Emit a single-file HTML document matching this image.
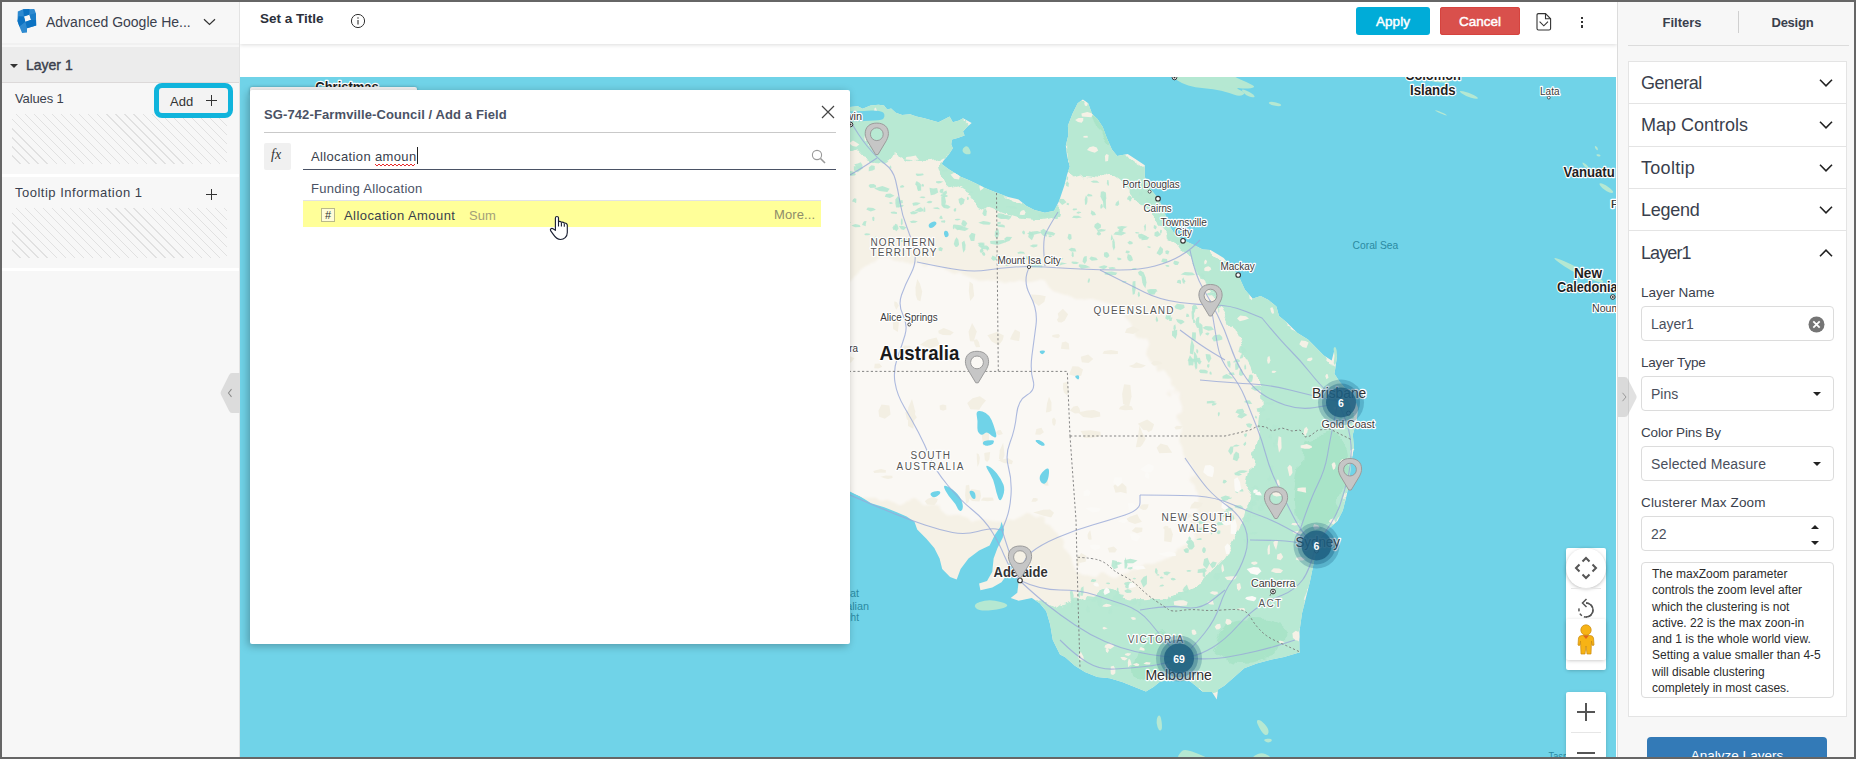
<!DOCTYPE html>
<html lang="en">
<head>
<meta charset="utf-8">
<title>Advanced Google Heatmap</title>
<style>
*{box-sizing:border-box;margin:0;padding:0}
html,body{width:1856px;height:759px;overflow:hidden;background:#666}
body{font-family:"Liberation Sans","DejaVu Sans",sans-serif;color:#3a3f4d;font-size:13px}
#app{position:absolute;left:2px;top:2px;width:1852px;height:755px;background:#fff;overflow:hidden}
.abs{position:absolute}
.t{position:absolute;white-space:nowrap;line-height:1}
/* left panel */
#left{position:absolute;left:0;top:0;width:238px;height:755px;background:#f7f7f7;border-right:1px solid #e3e3e3}
#lhead{position:absolute;left:0;top:0;width:237px;height:43px;border-bottom:2px solid #f1f1f1}
#layerrow{position:absolute;left:0;top:45px;width:237px;height:36px;background:#ececec;border-bottom:1px solid #dcd9d9}
.gap{position:absolute;left:0;width:237px;height:3px;background:#fff}
.hatch{position:absolute;left:10px;width:215px;background:repeating-linear-gradient(45deg,#f7f7f7 0,#f7f7f7 5.5px,#e1e1e1 5.5px,#e1e1e1 6.41px)}
/* top bar */
#topbar{position:absolute;left:238px;top:0;width:1377px;height:42px;background:#fff;box-shadow:0 1px 4px rgba(0,0,0,.14)}
.btn{position:absolute;top:5px;height:28px;border-radius:3px;color:#fff;-webkit-text-stroke:0.45px #fff;font-size:13.5px;text-align:center;line-height:30px}
/* map */
#map{position:absolute;left:238px;top:75px;width:1376px;height:680px;background:#70d3e8;overflow:hidden}
/* right */
#right{position:absolute;left:1615px;top:0;width:237px;height:755px;background:#f7f7f7;border-left:1px solid #dcdcdc}

/* right panel details */
.card{position:absolute;left:10px;width:219px;background:#fff;border:1px solid #e4e4e4}
.sec{position:absolute;left:23px;font-size:18px;color:#3a3f4d;white-space:nowrap;line-height:1}
.lbl{position:absolute;left:23px;font-size:13.5px;color:#3a3f4d;white-space:nowrap;line-height:1}
.inp{position:absolute;left:23px;width:193px;height:35px;border:1px solid #dcdcdc;border-radius:4px;background:#fff}
.inp span{position:absolute;left:9px;top:10px;font-size:14px;color:#4a4f5c;line-height:1;white-space:nowrap}
.chev{position:absolute;left:199.5px;width:16px;height:10px}
.caret{position:absolute;left:171px;top:15px;width:0;height:0;border-left:4px solid transparent;border-right:4px solid transparent;border-top:4.5px solid #222}
/* dialog */
#dlg{position:absolute;left:248px;top:88px;width:600px;height:554px;background:#fff;border-radius:2px;box-shadow:-2px 2px 8px rgba(0,0,0,.28)}
#dlgtab{position:absolute;left:248px;top:85px;width:167px;height:8px;background:#f3f3f3;border-radius:2px 2px 0 0;box-shadow:0 0 3px rgba(0,0,0,.3)}
</style>
</head>
<body>
<div id="app">

<!-- MAP -->
<div id="map">
<!--MAPSVG--><svg width="1376" height="680" viewBox="240 77 1376 680" style="position:absolute;left:0;top:0">
<defs><clipPath id="landclip"><path d="M838 107 L850 107.1 L857.9 106.3 L862.6 108.7 L870.6 105.6 L878.5 104.8 L884 105.6 L887.2 109.5 L891.1 108.4 L895.8 112.7 L902.2 115 L910.1 114.2 L916.4 116.6 L924.3 118.2 L932.2 120.6 L938.5 122.2 L944.9 119 L949.6 116.6 L952.8 122.2 L959.1 120.6 L963 118.2 L971.7 122.9 L967 126.9 L963 131.6 L964.6 135.6 L957.5 138 L952 139.5 L951.2 144.3 L952.8 148.2 L948.8 154.6 L943.3 160.9 L941.7 164 L948 168.8 L954.3 172.7 L960.7 176.7 L968.6 179.9 L976.5 183.8 L984.4 187.8 L992.3 190.9 L1000.2 194.1 L1008.1 196.9 L1018.6 199.5 L1026.5 206.1 L1034.4 210.0 L1044.9 212.7 L1054.2 210.8 L1059.2 200.8 L1064.5 185.0 L1067.1 174.5 L1069.8 166.6 L1067.1 156.0 L1065.8 145.5 L1068.4 135.0 L1067.9 125.7 L1072.4 113.9 L1077.7 103.3 L1082.9 99.4 L1088.2 103.3 L1092.1 113.9 L1097.4 119.1 L1102.7 127.1 L1106.6 137.6 L1111.9 149.4 L1117.2 156.0 L1127.7 153.9 L1136.9 160.0 L1144.8 165.3 L1144.8 177.1 L1151.4 190.3 L1158.0 198.2 L1163.3 208.7 L1168.5 224.5 L1173.8 232.4 L1183.0 240.3 L1192.3 244.3 L1202.8 249.6 L1210.5 250.0 L1223.7 257.9 L1238.2 275.0 L1244.8 289.5 L1252.7 298.7 L1260.6 296.1 L1268.5 300.1 L1276.4 306.6 L1279.0 315.9 L1286.9 322.4 L1297.5 333.0 L1308.0 339.6 L1315.9 347.5 L1323.8 355.4 L1331.7 360.6 L1334.4 350.1 L1337.0 355.4 L1335.7 365.9 L1334.4 373.8 L1339.6 381.7 L1346.2 389.6 L1354.1 397.5 L1358.1 408.1 L1356.7 421.2 L1352.8 434.4 L1354.1 449.9 L1353.4 450.0 L1350.7 465.8 L1349.4 481.6 L1346.8 494.8 L1342.8 510.6 L1337.6 521.1 L1328.4 529.0 L1319.1 539.6 L1315.2 555.4 L1312.6 568.5 L1309.9 581.7 L1306.0 597.5 L1302.0 613.3 L1299.4 631.8 L1299.4 649.9 L1300.0 652.2 L1284.0 657.1 L1271.6 659.6 L1256.7 663.4 L1244.2 668.3 L1234.3 677.0 L1224.3 685.8 L1218.1 689.5 L1216.8 699.4 L1211.9 692.0 L1203.1 692.0 L1195.7 685.8 L1189.4 680.8 L1179.5 680.8 L1169.5 679.5 L1159.6 682.0 L1153.4 687.0 L1145.9 691.5 L1134.7 687.0 L1122.2 682.0 L1109.8 678.3 L1097.3 677.0 L1084.9 672.1 L1074.9 665.8 L1065.0 657.1 L1060.0 654.6 L1052.8 639.9 L1050.2 624.4 L1046.3 611.2 L1039.7 603.3 L1031.8 598.1 L1018.6 600.7 L1010.7 598.1 L1017.3 592.8 L1018.6 582.3 L1014.6 571.7 L1010.7 561.2 L1008.1 566.4 L1005.4 577.0 L1001.5 582.3 L992.3 587.5 L980.4 590.2 L979.1 583.6 L987.0 580.9 L992.3 571.7 L993.6 558.5 L997.5 548.0 L1002.8 537.5 L1004.1 529.6 L1001.5 521.7 L1000.2 526.9 L994.9 534.8 L989.6 545.4 L979.1 550.6 L968.5 558.5 L960.6 569.1 L956.7 579.6 L950.1 577.0 L942.2 569.1 L939.6 558.5 L934.3 548.0 L926.4 538.8 L917.2 529.6 L914.5 521.7 L906.6 516.4 L897.4 512.4 L884.2 507.2 L871.1 503.2 L860.5 496.6 L850.0 491.4 L838 490 Z"/></clipPath><filter id="b6" x="-20%" y="-20%" width="140%" height="140%"><feTurbulence type="fractalNoise" baseFrequency="0.03" numOctaves="3" seed="9" result="n"/><feDisplacementMap in="SourceGraphic" in2="n" scale="30" xChannelSelector="R" yChannelSelector="G" result="d"/><feGaussianBlur in="d" stdDeviation="1.2"/></filter><filter id="b3" x="-10%" y="-10%" width="120%" height="120%"><feTurbulence type="fractalNoise" baseFrequency="0.035" numOctaves="3" seed="4" result="n"/><feDisplacementMap in="SourceGraphic" in2="n" scale="22" xChannelSelector="R" yChannelSelector="G"/></filter></defs>
<rect x="240" y="77" width="1376" height="680" fill="#70d3e8"/>
<path d="M838 107 L850 107.1 L857.9 106.3 L862.6 108.7 L870.6 105.6 L878.5 104.8 L884 105.6 L887.2 109.5 L891.1 108.4 L895.8 112.7 L902.2 115 L910.1 114.2 L916.4 116.6 L924.3 118.2 L932.2 120.6 L938.5 122.2 L944.9 119 L949.6 116.6 L952.8 122.2 L959.1 120.6 L963 118.2 L971.7 122.9 L967 126.9 L963 131.6 L964.6 135.6 L957.5 138 L952 139.5 L951.2 144.3 L952.8 148.2 L948.8 154.6 L943.3 160.9 L941.7 164 L948 168.8 L954.3 172.7 L960.7 176.7 L968.6 179.9 L976.5 183.8 L984.4 187.8 L992.3 190.9 L1000.2 194.1 L1008.1 196.9 L1018.6 199.5 L1026.5 206.1 L1034.4 210.0 L1044.9 212.7 L1054.2 210.8 L1059.2 200.8 L1064.5 185.0 L1067.1 174.5 L1069.8 166.6 L1067.1 156.0 L1065.8 145.5 L1068.4 135.0 L1067.9 125.7 L1072.4 113.9 L1077.7 103.3 L1082.9 99.4 L1088.2 103.3 L1092.1 113.9 L1097.4 119.1 L1102.7 127.1 L1106.6 137.6 L1111.9 149.4 L1117.2 156.0 L1127.7 153.9 L1136.9 160.0 L1144.8 165.3 L1144.8 177.1 L1151.4 190.3 L1158.0 198.2 L1163.3 208.7 L1168.5 224.5 L1173.8 232.4 L1183.0 240.3 L1192.3 244.3 L1202.8 249.6 L1210.5 250.0 L1223.7 257.9 L1238.2 275.0 L1244.8 289.5 L1252.7 298.7 L1260.6 296.1 L1268.5 300.1 L1276.4 306.6 L1279.0 315.9 L1286.9 322.4 L1297.5 333.0 L1308.0 339.6 L1315.9 347.5 L1323.8 355.4 L1331.7 360.6 L1334.4 350.1 L1337.0 355.4 L1335.7 365.9 L1334.4 373.8 L1339.6 381.7 L1346.2 389.6 L1354.1 397.5 L1358.1 408.1 L1356.7 421.2 L1352.8 434.4 L1354.1 449.9 L1353.4 450.0 L1350.7 465.8 L1349.4 481.6 L1346.8 494.8 L1342.8 510.6 L1337.6 521.1 L1328.4 529.0 L1319.1 539.6 L1315.2 555.4 L1312.6 568.5 L1309.9 581.7 L1306.0 597.5 L1302.0 613.3 L1299.4 631.8 L1299.4 649.9 L1300.0 652.2 L1284.0 657.1 L1271.6 659.6 L1256.7 663.4 L1244.2 668.3 L1234.3 677.0 L1224.3 685.8 L1218.1 689.5 L1216.8 699.4 L1211.9 692.0 L1203.1 692.0 L1195.7 685.8 L1189.4 680.8 L1179.5 680.8 L1169.5 679.5 L1159.6 682.0 L1153.4 687.0 L1145.9 691.5 L1134.7 687.0 L1122.2 682.0 L1109.8 678.3 L1097.3 677.0 L1084.9 672.1 L1074.9 665.8 L1065.0 657.1 L1060.0 654.6 L1052.8 639.9 L1050.2 624.4 L1046.3 611.2 L1039.7 603.3 L1031.8 598.1 L1018.6 600.7 L1010.7 598.1 L1017.3 592.8 L1018.6 582.3 L1014.6 571.7 L1010.7 561.2 L1008.1 566.4 L1005.4 577.0 L1001.5 582.3 L992.3 587.5 L980.4 590.2 L979.1 583.6 L987.0 580.9 L992.3 571.7 L993.6 558.5 L997.5 548.0 L1002.8 537.5 L1004.1 529.6 L1001.5 521.7 L1000.2 526.9 L994.9 534.8 L989.6 545.4 L979.1 550.6 L968.5 558.5 L960.6 569.1 L956.7 579.6 L950.1 577.0 L942.2 569.1 L939.6 558.5 L934.3 548.0 L926.4 538.8 L917.2 529.6 L914.5 521.7 L906.6 516.4 L897.4 512.4 L884.2 507.2 L871.1 503.2 L860.5 496.6 L850.0 491.4 L838 490 Z" fill="#f5f1e6"/>
<g clip-path="url(#landclip)">
<path d="M838.0 379.0 Q838 268 869.0 265.0 Q900 262 930.0 265.0 Q960 268 980.0 276.5 Q1000 285 1030.0 287.5 Q1060 290 1085.0 297.5 Q1110 305 1125.0 320.0 Q1140 335 1152.5 352.5 Q1165 370 1170.0 390.0 Q1175 410 1180.0 430.0 Q1185 450 1192.5 470.0 Q1200 490 1197.5 510.0 Q1195 530 1177.5 547.5 Q1160 565 1135.0 570.0 Q1110 575 1095.0 575.0 Q1080 575 1070.0 552.5 Q1060 530 1040.0 520.0 Q1020 510 1000.0 515.0 Q980 520 960.0 510.0 Q940 500 920.0 502.5 Q900 505 880.0 500.0 Q860 495 849.0 492.5 Q838 490 838.0 379.0 Z" fill="#faf8f4" filter="url(#b6)"/>
<path d="M838.0 127.5 Q838 95 859.0 95.0 Q880 95 905.0 102.5 Q930 110 952.5 114.0 Q975 118 967.5 129.0 Q960 140 952.5 150.0 Q945 160 932.5 162.5 Q920 165 910.0 157.5 Q900 150 890.0 155.0 Q880 160 870.0 155.0 Q860 150 849.0 155.0 Q838 160 838.0 127.5 Z" fill="#b5e8d2" filter="url(#b3)" opacity="0.95"/>
<path d="M937.5 165.0 Q940 160 950.0 165.0 Q960 170 980.0 182.5 Q1000 195 1020.0 202.5 Q1040 210 1050.0 205.0 Q1060 200 1060.0 207.5 Q1060 215 1045.0 218.5 Q1030 222 1010.0 215.0 Q990 208 972.5 199.0 Q955 190 945.0 180.0 Q935 170 937.5 165.0 Z" fill="#b5e8d2" filter="url(#b3)" opacity="0.95"/>
<path d="M1062.0 130.0 Q1062 100 1076.0 97.5 Q1090 95 1100.0 112.5 Q1110 130 1120.0 145.0 Q1130 160 1140.0 165.0 Q1150 170 1157.5 185.0 Q1165 200 1175.0 215.0 Q1185 230 1192.5 237.5 Q1200 245 1190.0 247.5 Q1180 250 1167.5 237.5 Q1155 225 1145.0 212.5 Q1135 200 1126.5 190.0 Q1118 180 1109.0 176.0 Q1100 172 1090.0 172.0 Q1080 172 1073.0 174.0 Q1066 176 1064.0 168.0 Q1062 160 1062.0 130.0 Z" fill="#b5e8d2" filter="url(#b3)" opacity="0.95"/>
<path d="M1177.5 232.5 Q1180 225 1197.5 237.5 Q1215 250 1230.0 265.0 Q1245 280 1260.0 292.5 Q1275 305 1287.5 317.5 Q1300 330 1317.5 345.0 Q1335 360 1342.5 375.0 Q1350 390 1355.0 410.0 Q1360 430 1357.5 450.0 Q1355 470 1347.5 495.0 Q1340 520 1330.0 540.0 Q1320 560 1310.0 590.0 Q1300 620 1300.0 640.0 Q1300 660 1275.0 670.0 Q1250 680 1225.0 690.0 Q1200 700 1175.0 700.0 Q1150 700 1125.0 695.0 Q1100 690 1080.0 680.0 Q1060 670 1050.0 655.0 Q1040 640 1035.0 622.5 Q1030 605 1037.5 601.5 Q1045 598 1053.5 604.0 Q1062 610 1073.5 605.0 Q1085 600 1095.0 595.0 Q1105 590 1120.0 595.0 Q1135 600 1150.0 599.0 Q1165 598 1180.0 594.0 Q1195 590 1207.5 577.5 Q1220 565 1229.0 547.5 Q1238 530 1243.0 510.0 Q1248 490 1251.5 470.0 Q1255 450 1258.5 430.0 Q1262 410 1260.0 392.5 Q1258 375 1249.0 360.0 Q1240 345 1232.5 330.0 Q1225 315 1215.0 300.0 Q1205 285 1197.5 272.5 Q1190 260 1182.5 250.0 Q1175 240 1177.5 232.5 Z" fill="#b5e8d2" filter="url(#b3)" opacity="0.95"/>
<path d="M1302.5 455.0 Q1305 440 1322.5 435.0 Q1340 430 1345.0 450.0 Q1350 470 1342.5 495.0 Q1335 520 1322.5 530.0 Q1310 540 1302.5 525.0 Q1295 510 1297.5 490.0 Q1300 470 1302.5 455.0 Z" fill="#98ddbb" filter="url(#b3)" opacity="0.45"/>
<path d="M1215.0 637.5 Q1220 625 1240.0 620.0 Q1260 615 1275.0 622.5 Q1290 630 1285.0 642.5 Q1280 655 1260.0 660.0 Q1240 665 1225.0 657.5 Q1210 650 1215.0 637.5 Z" fill="#98ddbb" filter="url(#b3)" opacity="0.45"/>
<path d="M1135.0 657.5 Q1140 640 1160.0 635.0 Q1180 630 1190.0 645.0 Q1200 660 1185.0 670.0 Q1170 680 1150.0 677.5 Q1130 675 1135.0 657.5 Z" fill="#98ddbb" filter="url(#b3)" opacity="0.45"/>
<path d="M1097.0 130.0 Q1090 110 1095.0 107.5 Q1100 105 1106.0 122.5 Q1112 140 1108.0 145.0 Q1104 150 1097.0 130.0 Z" fill="#98ddbb" filter="url(#b3)" opacity="0.45"/>
<path d="M898.8 225.9 L902.9 226.0 L906.6 227.3 L903.8 230.0 L901.1 229.3 Z" fill="#b5e8d2" opacity="0.9"/>
<path d="M1185.3 552.5 L1183.4 549.8 L1186.0 548.2 L1187.8 548.2 L1189.0 550.0 L1188.3 553.0 Z" fill="#b5e8d2" opacity="0.9"/>
<path d="M1190.8 361.5 L1187.4 360.3 L1189.8 358.8 L1194.3 358.7 L1197.7 359.4 L1199.9 361.0 L1195.1 361.8 Z" fill="#b5e8d2" opacity="0.9"/>
<path d="M1194.9 323.0 L1193.3 323.0 L1192.9 320.2 L1194.6 319.5 L1195.3 321.2 Z" fill="#b5e8d2" opacity="0.9"/>
<path d="M872.2 217.5 L873.3 216.4 L874.5 217.7 L874.1 221.0 L873.1 221.0 L872.4 220.1 Z" fill="#b5e8d2" opacity="0.9"/>
<path d="M1087.8 282.7 L1087.7 280.7 L1088.2 279.7 L1089.0 277.8 L1090.0 279.5 L1089.7 281.0 L1089.2 282.5 Z" fill="#b5e8d2" opacity="0.9"/>
<path d="M1237.3 409.4 L1242.7 408.8 L1244.3 411.5 L1243.3 413.5 L1239.6 414.2 L1235.4 412.5 Z" fill="#b5e8d2" opacity="0.9"/>
<path d="M1253.0 375.4 L1252.7 377.4 L1250.6 378.3 L1249.1 377.0 L1248.9 375.8 L1249.7 374.8 L1251.0 374.8 Z" fill="#b5e8d2" opacity="0.9"/>
<path d="M1244.3 541.9 L1243.2 539.3 L1248.4 539.3 L1249.7 541.7 L1246.8 543.7 Z" fill="#b5e8d2" opacity="0.9"/>
<path d="M887.3 192.0 L879.5 190.9 L874.1 188.6 L882.4 186.1 L889.7 188.7 Z" fill="#b5e8d2" opacity="0.9"/>
<path d="M1068.5 205.2 L1066.7 204.8 L1066.6 203.5 L1067.9 202.8 L1069.2 203.7 Z" fill="#b5e8d2" opacity="0.9"/>
<path d="M1127.4 242.8 L1129.6 240.7 L1132.5 242.0 L1132.6 244.0 L1129.6 244.4 Z" fill="#b5e8d2" opacity="0.9"/>
<path d="M875.5 240.8 L874.6 239.2 L874.9 236.9 L875.8 236.2 L876.4 236.9 L876.5 238.3 L876.4 240.0 Z" fill="#b5e8d2" opacity="0.9"/>
<path d="M1153.6 228.0 L1154.0 225.0 L1156.4 226.0 L1156.7 227.8 L1155.4 229.5 Z" fill="#b5e8d2" opacity="0.9"/>
<path d="M845.1 244.0 L846.4 243.5 L848.1 243.3 L849.9 243.7 L849.8 244.4 L848.0 244.8 L845.9 244.6 Z" fill="#b5e8d2" opacity="0.9"/>
<path d="M1000.2 221.7 L1001.1 223.3 L998.9 224.2 L997.1 223.4 L997.4 222.3 Z" fill="#b5e8d2" opacity="0.9"/>
<path d="M972.6 191.5 L973.0 192.3 L971.9 193.0 L970.0 192.9 L970.0 192.0 L970.8 191.1 Z" fill="#b5e8d2" opacity="0.9"/>
<path d="M998.4 229.1 L999.3 233.4 L998.2 237.0 L996.3 238.5 L994.7 235.8 L995.0 231.8 L996.4 230.2 Z" fill="#b5e8d2" opacity="0.9"/>
<path d="M1132.6 578.2 L1134.4 577.8 L1135.9 578.2 L1136.1 578.7 L1135.6 579.1 L1134.2 579.4 L1133.4 578.9 Z" fill="#b5e8d2" opacity="0.9"/>
<path d="M1272.3 426.7 L1273.2 424.1 L1275.0 425.1 L1277.6 426.1 L1276.9 430.3 L1274.3 429.8 L1272.4 429.8 Z" fill="#b5e8d2" opacity="0.9"/>
<path d="M1227.7 378.8 L1222.5 378.5 L1222.6 376.0 L1226.6 373.9 L1230.1 376.0 L1233.7 378.3 Z" fill="#b5e8d2" opacity="0.9"/>
<path d="M1150.3 293.8 L1148.7 292.9 L1148.4 291.3 L1150.6 289.6 L1154.2 290.4 L1155.4 292.7 L1152.7 294.2 Z" fill="#b5e8d2" opacity="0.9"/>
<path d="M1073.8 256.5 L1072.5 257.2 L1071.6 255.3 L1072.0 251.9 L1073.5 252.5 Z" fill="#b5e8d2" opacity="0.9"/>
<path d="M1191.6 340.1 L1192.0 336.1 L1192.2 332.3 L1195.9 332.4 L1195.9 336.4 L1195.6 340.6 Z" fill="#b5e8d2" opacity="0.9"/>
<path d="M1063.5 259.1 L1061.4 259.5 L1058.9 259.1 L1060.4 257.9 L1062.4 258.0 Z" fill="#b5e8d2" opacity="0.9"/>
<path d="M984.8 249.2 L981.2 248.7 L981.1 246.5 L983.8 245.5 L986.7 245.6 L988.5 246.9 L989.5 249.4 Z" fill="#b5e8d2" opacity="0.9"/>
<path d="M1094.2 227.0 L1094.7 224.6 L1097.8 222.6 L1101.0 224.7 L1100.9 227.5 L1097.1 229.9 Z" fill="#b5e8d2" opacity="0.9"/>
<path d="M1113.9 569.3 L1111.4 566.0 L1112.3 559.9 L1116.9 561.1 L1117.8 567.7 Z" fill="#b5e8d2" opacity="0.9"/>
<path d="M1239.2 367.1 L1237.6 369.6 L1235.4 370.0 L1235.1 363.6 L1237.9 362.7 Z" fill="#b5e8d2" opacity="0.9"/>
<path d="M1202.6 524.1 L1198.9 523.5 L1198.6 522.2 L1199.7 520.4 L1203.2 521.5 L1205.6 522.8 Z" fill="#b5e8d2" opacity="0.9"/>
<path d="M962.3 228.6 L957.5 230.2 L954.4 227.7 L953.9 224.6 L958.9 225.1 L963.0 225.8 Z" fill="#b5e8d2" opacity="0.9"/>
<path d="M1210.7 281.4 L1211.0 283.7 L1208.8 283.8 L1208.8 281.7 L1209.5 280.0 Z" fill="#b5e8d2" opacity="0.9"/>
<path d="M1163.1 249.0 L1162.7 253.1 L1159.9 255.6 L1156.5 253.3 L1158.5 249.7 L1160.2 246.3 Z" fill="#b5e8d2" opacity="0.9"/>
<path d="M1165.3 218.5 L1165.3 221.1 L1163.9 223.4 L1162.9 220.5 L1162.3 218.0 L1163.2 215.1 L1165.1 215.3 Z" fill="#b5e8d2" opacity="0.9"/>
<path d="M984.3 256.1 L983.1 255.6 L981.7 253.6 L983.3 251.8 L984.8 252.7 L985.3 254.7 Z" fill="#b5e8d2" opacity="0.9"/>
<path d="M1076.3 251.5 L1071.3 251.6 L1068.5 249.6 L1071.6 247.8 L1075.2 248.5 Z" fill="#b5e8d2" opacity="0.9"/>
<path d="M996.5 216.5 L998.1 213.3 L1001.3 213.6 L1004.1 214.2 L1004.8 217.3 L1002.0 219.0 L999.4 218.4 Z" fill="#b5e8d2" opacity="0.9"/>
<path d="M1173.4 328.4 L1173.7 325.8 L1175.3 324.3 L1175.9 328.1 L1174.6 331.7 Z" fill="#b5e8d2" opacity="0.9"/>
<path d="M919.3 197.3 L921.5 196.6 L923.2 196.6 L925.5 197.1 L924.2 198.3 L921.5 198.0 Z" fill="#b5e8d2" opacity="0.9"/>
<path d="M1160.6 584.9 L1162.8 584.4 L1164.2 585.8 L1162.1 586.4 L1159.1 586.5 Z" fill="#b5e8d2" opacity="0.9"/>
<path d="M1072.3 601.4 L1071.4 599.0 L1074.7 597.6 L1078.3 598.0 L1078.5 600.1 L1079.1 602.4 L1075.2 602.8 Z" fill="#b5e8d2" opacity="0.9"/>
<path d="M1244.4 369.3 L1244.3 366.6 L1245.0 363.9 L1246.0 365.9 L1246.2 369.1 L1245.2 369.6 Z" fill="#b5e8d2" opacity="0.9"/>
<path d="M1256.5 504.9 L1252.8 505.7 L1248.9 504.2 L1251.7 500.8 L1255.6 500.0 Z" fill="#b5e8d2" opacity="0.9"/>
<path d="M930.8 195.3 L930.0 191.5 L929.5 187.8 L933.1 188.5 L937.1 187.9 L938.2 192.4 L934.5 194.4 Z" fill="#b5e8d2" opacity="0.9"/>
<path d="M1117.1 606.7 L1112.8 605.4 L1111.7 603.4 L1118.2 602.9 L1121.6 604.1 L1123.5 606.0 Z" fill="#b5e8d2" opacity="0.9"/>
<path d="M1184.7 282.6 L1183.5 281.7 L1183.7 280.1 L1184.8 280.2 L1185.6 281.2 Z" fill="#b5e8d2" opacity="0.9"/>
<path d="M1253.1 514.5 L1258.4 514.7 L1259.6 516.2 L1256.6 516.9 L1252.1 516.6 Z" fill="#b5e8d2" opacity="0.9"/>
<path d="M1052.3 236.5 L1050.2 237.2 L1048.8 236.9 L1048.5 235.6 L1050.6 235.3 Z" fill="#b5e8d2" opacity="0.9"/>
<path d="M1175.9 579.7 L1173.2 580.5 L1171.1 579.8 L1170.7 578.4 L1172.6 577.8 L1174.7 578.2 Z" fill="#b5e8d2" opacity="0.9"/>
<path d="M1103.9 202.9 L1101.7 199.3 L1100.4 196.4 L1100.9 191.7 L1103.2 191.2 L1105.9 192.5 L1106.3 198.7 Z" fill="#b5e8d2" opacity="0.9"/>
<path d="M1232.8 520.4 L1230.9 520.8 L1231.0 515.4 L1233.1 514.4 L1234.4 518.4 Z" fill="#b5e8d2" opacity="0.9"/>
<path d="M1168.1 265.1 L1169.5 265.9 L1168.3 266.9 L1166.2 266.6 L1165.3 265.1 Z" fill="#b5e8d2" opacity="0.9"/>
<path d="M1272.1 436.9 L1271.2 440.2 L1269.7 438.2 L1268.6 436.8 L1269.4 434.5 L1271.1 433.9 Z" fill="#b5e8d2" opacity="0.9"/>
<path d="M989.5 224.7 L983.4 224.4 L978.3 222.8 L983.2 221.0 L988.0 221.7 L990.9 222.7 Z" fill="#b5e8d2" opacity="0.9"/>
<path d="M1110.3 608.1 L1112.0 608.6 L1112.3 612.1 L1111.0 613.6 L1109.7 614.6 L1108.0 612.7 L1109.2 609.9 Z" fill="#b5e8d2" opacity="0.9"/>
<path d="M917.5 186.8 L919.0 185.0 L920.1 187.2 L920.8 189.5 L918.4 190.7 L917.4 188.4 Z" fill="#b5e8d2" opacity="0.9"/>
<path d="M915.2 184.5 L915.9 182.1 L916.9 181.1 L918.1 182.2 L917.6 184.3 L916.6 185.8 Z" fill="#b5e8d2" opacity="0.9"/>
<path d="M1250.6 511.5 L1249.3 509.9 L1250.2 506.1 L1250.7 503.7 L1252.1 502.8 L1252.6 508.0 L1251.8 512.1 Z" fill="#b5e8d2" opacity="0.9"/>
<path d="M1179.9 596.7 L1181.9 598.7 L1178.6 600.4 L1173.9 600.5 L1171.5 599.0 L1172.5 597.4 L1175.4 596.1 Z" fill="#b5e8d2" opacity="0.9"/>
<path d="M1247.6 518.0 L1250.8 519.7 L1247.8 521.8 L1244.1 521.8 L1241.9 519.0 L1244.5 516.1 Z" fill="#b5e8d2" opacity="0.9"/>
<path d="M1073.7 215.7 L1078.5 215.7 L1081.9 217.5 L1076.7 218.2 L1072.0 217.7 Z" fill="#b5e8d2" opacity="0.9"/>
<path d="M1018.1 253.7 L1017.3 252.4 L1020.0 251.4 L1023.3 251.8 L1024.2 252.6 L1025.2 253.7 L1021.7 253.5 Z" fill="#b5e8d2" opacity="0.9"/>
<path d="M1182.5 590.1 L1184.3 587.2 L1186.9 584.5 L1188.3 588.6 L1188.3 593.1 L1184.9 592.3 Z" fill="#b5e8d2" opacity="0.9"/>
<path d="M1029.6 246.1 L1032.9 244.6 L1037.5 244.6 L1037.2 246.5 L1033.6 247.4 Z" fill="#b5e8d2" opacity="0.9"/>
<path d="M1139.0 606.1 L1138.4 603.0 L1139.6 601.5 L1140.9 600.4 L1141.3 603.5 L1140.6 606.1 Z" fill="#b5e8d2" opacity="0.9"/>
<path d="M1125.4 252.6 L1126.3 250.5 L1129.7 251.1 L1129.4 252.9 L1127.5 253.5 Z" fill="#b5e8d2" opacity="0.9"/>
<path d="M911.6 223.1 L909.7 221.6 L913.1 220.4 L917.9 221.3 L915.4 222.8 Z" fill="#b5e8d2" opacity="0.9"/>
<path d="M1125.6 587.7 L1125.0 586.1 L1126.9 584.4 L1129.4 585.7 L1129.9 587.9 L1127.4 588.5 Z" fill="#b5e8d2" opacity="0.9"/>
<path d="M892.3 202.4 L892.7 203.7 L890.0 204.0 L889.0 202.8 L890.6 202.1 Z" fill="#b5e8d2" opacity="0.9"/>
<path d="M857.8 163.6 L860.8 162.3 L862.5 165.3 L862.2 169.1 L858.1 169.6 L856.4 167.0 L854.3 164.3 Z" fill="#b5e8d2" opacity="0.9"/>
<path d="M1084.4 256.5 L1086.7 256.1 L1086.9 260.7 L1084.8 263.9 L1082.5 261.6 L1083.3 257.9 Z" fill="#b5e8d2" opacity="0.9"/>
<path d="M1133.3 268.2 L1135.3 268.1 L1137.0 268.9 L1135.8 269.8 L1133.5 270.0 L1132.2 269.4 L1131.9 268.7 Z" fill="#b5e8d2" opacity="0.9"/>
<path d="M1143.4 587.6 L1140.6 581.1 L1143.5 576.9 L1147.0 575.6 L1146.9 584.1 Z" fill="#b5e8d2" opacity="0.9"/>
<path d="M943.0 222.6 L941.2 222.2 L941.2 220.8 L943.1 220.6 L945.0 220.3 L945.3 221.6 L944.9 222.8 Z" fill="#b5e8d2" opacity="0.9"/>
<path d="M1087.3 596.1 L1093.0 596.7 L1097.0 597.3 L1096.7 598.9 L1093.2 599.6 L1086.9 600.5 L1085.7 598.2 Z" fill="#b5e8d2" opacity="0.9"/>
<path d="M1034.0 235.7 L1031.9 240.2 L1028.2 236.9 L1029.4 231.0 L1032.5 232.8 Z" fill="#b5e8d2" opacity="0.9"/>
<path d="M1250.9 519.1 L1249.0 523.2 L1246.6 520.5 L1246.8 515.9 L1248.1 512.5 L1250.5 513.7 Z" fill="#b5e8d2" opacity="0.9"/>
<path d="M1091.9 194.7 L1092.5 196.3 L1087.7 196.6 L1086.9 195.2 L1088.3 193.8 Z" fill="#b5e8d2" opacity="0.9"/>
<path d="M1068.6 186.9 L1066.0 185.8 L1065.7 183.2 L1067.2 181.0 L1068.8 183.2 Z" fill="#b5e8d2" opacity="0.9"/>
<path d="M986.3 249.1 L986.4 247.4 L987.5 246.4 L988.7 247.5 L988.3 249.3 L987.2 251.2 Z" fill="#b5e8d2" opacity="0.9"/>
<path d="M1050.4 259.5 L1051.2 257.3 L1053.1 258.4 L1052.8 261.8 L1050.7 262.1 Z" fill="#b5e8d2" opacity="0.9"/>
<path d="M1118.9 229.9 L1119.9 228.7 L1123.1 228.9 L1123.3 230.3 L1122.3 231.3 L1119.9 231.9 L1118.1 230.9 Z" fill="#b5e8d2" opacity="0.9"/>
<path d="M1167.2 315.5 L1166.7 311.4 L1167.9 308.5 L1170.0 310.3 L1170.4 315.4 Z" fill="#b5e8d2" opacity="0.9"/>
<path d="M891.4 167.0 L891.2 168.8 L890.0 168.2 L889.3 166.9 L890.5 165.3 Z" fill="#b5e8d2" opacity="0.9"/>
<path d="M1108.7 253.7 L1109.4 256.1 L1107.0 257.9 L1104.3 256.7 L1103.9 254.7 L1104.2 252.4 L1107.0 251.9 Z" fill="#b5e8d2" opacity="0.9"/>
<path d="M1009.4 208.1 L1005.8 206.8 L1010.5 206.1 L1014.0 206.1 L1016.0 207.1 L1017.0 208.7 L1012.1 208.6 Z" fill="#b5e8d2" opacity="0.9"/>
<path d="M1103.3 591.2 L1106.9 589.7 L1111.2 590.9 L1111.2 592.4 L1106.6 592.2 Z" fill="#b5e8d2" opacity="0.9"/>
<path d="M1031.5 235.6 L1026.9 233.2 L1032.4 231.6 L1037.2 231.1 L1042.4 232.8 L1036.7 234.1 Z" fill="#b5e8d2" opacity="0.9"/>
<path d="M1244.3 413.0 L1247.4 414.9 L1244.6 416.5 L1241.6 418.6 L1237.2 417.0 L1238.4 415.0 L1240.2 413.8 Z" fill="#b5e8d2" opacity="0.9"/>
<path d="M1197.6 540.1 L1196.3 539.2 L1197.9 538.7 L1200.5 538.1 L1202.1 539.1 L1201.0 540.0 Z" fill="#b5e8d2" opacity="0.9"/>
<path d="M1100.4 205.8 L1101.2 203.9 L1102.3 204.3 L1102.9 206.8 L1102.0 208.2 L1101.4 208.5 L1100.4 208.5 Z" fill="#b5e8d2" opacity="0.9"/>
<path d="M914.7 214.3 L911.2 214.2 L910.0 212.6 L913.2 211.1 L918.4 212.5 Z" fill="#b5e8d2" opacity="0.9"/>
<path d="M1157.5 574.2 L1159.1 574.3 L1159.3 575.4 L1157.8 575.6 L1156.0 575.1 Z" fill="#b5e8d2" opacity="0.9"/>
<path d="M875.9 209.7 L870.7 211.5 L866.3 209.5 L867.8 207.4 L873.3 207.9 Z" fill="#b5e8d2" opacity="0.9"/>
<path d="M868.9 167.2 L871.6 165.3 L874.7 166.1 L874.9 169.3 L872.6 170.5 L868.7 171.3 Z" fill="#b5e8d2" opacity="0.9"/>
<path d="M1250.6 427.9 L1247.6 427.1 L1245.9 423.9 L1249.2 423.2 L1252.3 424.3 Z" fill="#b5e8d2" opacity="0.9"/>
<path d="M1106.1 229.7 L1104.3 231.3 L1098.0 231.9 L1097.0 229.9 L1101.3 228.9 Z" fill="#b5e8d2" opacity="0.9"/>
<path d="M1229.7 497.7 L1232.1 497.6 L1231.3 498.6 L1230.0 498.9 L1227.7 499.0 L1227.4 497.8 Z" fill="#b5e8d2" opacity="0.9"/>
<path d="M1235.3 481.6 L1236.7 480.4 L1238.7 479.7 L1238.2 486.1 L1237.9 493.2 L1235.5 492.3 L1235.3 486.0 Z" fill="#b5e8d2" opacity="0.9"/>
<path d="M1200.1 336.5 L1198.7 329.8 L1199.4 322.5 L1202.4 324.9 L1202.8 332.4 Z" fill="#b5e8d2" opacity="0.9"/>
<path d="M1270.3 465.3 L1273.0 465.7 L1273.4 470.6 L1270.9 472.0 L1269.8 469.1 Z" fill="#b5e8d2" opacity="0.9"/>
<path d="M1130.0 201.7 L1129.1 199.9 L1128.6 198.6 L1129.4 197.7 L1130.4 196.7 L1130.8 198.4 L1131.3 200.2 Z" fill="#b5e8d2" opacity="0.9"/>
<path d="M1141.6 237.8 L1144.6 235.9 L1149.3 237.5 L1147.3 239.8 L1141.5 240.3 Z" fill="#b5e8d2" opacity="0.9"/>
<path d="M986.8 211.3 L986.3 215.8 L984.1 215.9 L982.3 213.4 L983.6 210.2 L985.3 208.0 Z" fill="#b5e8d2" opacity="0.9"/>
<path d="M1024.4 230.9 L1024.9 232.0 L1024.8 234.2 L1023.0 234.3 L1022.0 231.9 L1023.4 230.4 Z" fill="#b5e8d2" opacity="0.9"/>
<path d="M865.7 226.2 L863.9 225.5 L862.0 224.9 L863.0 222.8 L864.1 221.2 L866.5 221.0 L865.8 223.9 Z" fill="#b5e8d2" opacity="0.9"/>
<path d="M1059.3 262.4 L1061.9 262.6 L1067.2 263.5 L1062.5 264.6 L1058.9 265.7 L1055.9 264.3 L1057.3 263.1 Z" fill="#b5e8d2" opacity="0.9"/>
<path d="M1260.0 498.3 L1257.7 501.1 L1254.7 498.8 L1254.8 494.7 L1257.8 492.5 L1260.9 494.7 Z" fill="#b5e8d2" opacity="0.9"/>
<path d="M1160.6 578.6 L1159.8 577.8 L1160.3 577.0 L1161.7 576.4 L1162.7 577.2 L1164.0 578.0 L1162.3 578.6 Z" fill="#b5e8d2" opacity="0.9"/>
<path d="M1167.6 600.8 L1167.9 598.1 L1168.7 596.3 L1169.6 597.6 L1170.0 600.0 L1169.5 602.4 L1168.5 602.3 Z" fill="#b5e8d2" opacity="0.9"/>
<path d="M897.6 196.3 L900.2 199.0 L899.8 203.2 L899.1 207.3 L896.1 207.5 L895.4 203.2 L895.4 199.5 Z" fill="#b5e8d2" opacity="0.9"/>
<path d="M1136.4 603.7 L1132.4 605.0 L1129.0 602.4 L1131.2 599.4 L1135.5 598.1 L1137.5 601.1 Z" fill="#b5e8d2" opacity="0.9"/>
<path d="M1218.8 305.1 L1220.8 305.8 L1219.8 307.0 L1217.0 307.5 L1214.8 306.3 L1216.2 305.0 Z" fill="#b5e8d2" opacity="0.9"/>
<path d="M1091.0 580.5 L1092.2 578.9 L1096.2 579.7 L1095.9 581.2 L1093.8 581.9 L1090.8 581.8 Z" fill="#b5e8d2" opacity="0.9"/>
<path d="M1274.8 441.1 L1275.3 439.2 L1276.5 438.6 L1276.6 442.7 L1275.3 443.9 Z" fill="#b5e8d2" opacity="0.9"/>
<path d="M1274.6 442.8 L1275.3 444.2 L1276.8 446.0 L1275.1 447.2 L1273.7 447.0 L1273.5 445.3 L1272.9 443.0 Z" fill="#b5e8d2" opacity="0.9"/>
<path d="M1197.8 361.7 L1198.9 360.5 L1200.1 360.6 L1201.6 361.2 L1200.9 362.7 L1200.0 364.4 L1198.2 363.6 Z" fill="#b5e8d2" opacity="0.9"/>
<path d="M959.1 244.7 L957.1 247.1 L955.3 246.8 L953.8 243.9 L954.8 240.1 L956.5 237.3 L958.4 239.8 Z" fill="#b5e8d2" opacity="0.9"/>
<path d="M1243.1 470.2 L1247.8 471.1 L1244.5 472.7 L1241.4 472.9 L1235.9 472.4 L1239.3 470.5 Z" fill="#b5e8d2" opacity="0.9"/>
<path d="M1209.1 295.6 L1206.5 294.3 L1208.0 293.1 L1211.6 292.6 L1215.6 293.0 L1215.5 294.3 L1213.1 295.0 Z" fill="#b5e8d2" opacity="0.9"/>
<path d="M1243.6 347.3 L1246.6 351.1 L1242.5 354.0 L1238.4 351.7 L1239.8 346.4 Z" fill="#b5e8d2" opacity="0.9"/>
<path d="M1156.6 568.2 L1157.6 570.4 L1157.4 574.2 L1156.0 573.8 L1154.9 572.1 L1155.3 568.5 Z" fill="#b5e8d2" opacity="0.9"/>
<path d="M1179.2 279.8 L1180.5 280.1 L1181.0 281.6 L1181.0 284.1 L1179.0 283.2 L1176.8 282.8 L1177.6 280.3 Z" fill="#b5e8d2" opacity="0.9"/>
<path d="M1152.9 290.2 L1156.2 291.4 L1154.6 294.5 L1150.5 294.7 L1147.7 292.3 L1149.6 289.4 Z" fill="#b5e8d2" opacity="0.9"/>
<path d="M978.9 244.1 L984.7 243.4 L984.1 246.0 L980.8 247.8 L978.3 245.8 Z" fill="#b5e8d2" opacity="0.9"/>
<path d="M853.1 175.6 L851.2 175.7 L850.0 174.9 L850.6 173.9 L853.1 173.6 L855.1 174.2 L855.1 175.3 Z" fill="#b5e8d2" opacity="0.9"/>
<path d="M1205.6 354.1 L1210.2 354.5 L1211.3 358.5 L1208.8 362.9 L1206.3 358.8 Z" fill="#b5e8d2" opacity="0.9"/>
<path d="M1175.6 339.0 L1172.0 335.6 L1172.1 331.1 L1177.2 329.8 L1177.1 334.5 Z" fill="#b5e8d2" opacity="0.9"/>
<path d="M1252.9 377.7 L1252.1 381.6 L1250.5 382.3 L1247.5 381.2 L1249.3 375.9 L1251.3 374.3 Z" fill="#b5e8d2" opacity="0.9"/>
<path d="M1243.3 356.2 L1242.5 358.0 L1239.6 358.7 L1240.9 355.3 L1242.8 352.6 Z" fill="#b5e8d2" opacity="0.9"/>
<path d="M884.8 196.8 L886.0 194.0 L890.4 193.5 L894.5 195.7 L889.9 197.9 Z" fill="#b5e8d2" opacity="0.9"/>
<path d="M845.0 176.4 L843.7 172.3 L845.7 171.4 L847.6 170.5 L847.3 175.3 L847.2 178.8 L845.7 178.4 Z" fill="#b5e8d2" opacity="0.9"/>
<path d="M1058.0 198.7 L1063.6 199.1 L1066.5 202.2 L1062.2 205.1 L1059.4 202.2 Z" fill="#b5e8d2" opacity="0.9"/>
<path d="M1079.1 262.7 L1076.8 263.9 L1073.6 263.9 L1071.5 263.0 L1071.9 261.4 L1076.2 261.8 Z" fill="#b5e8d2" opacity="0.9"/>
<path d="M1156.2 316.3 L1157.4 317.8 L1158.2 320.7 L1156.8 322.2 L1155.7 320.1 Z" fill="#b5e8d2" opacity="0.9"/>
<path d="M1197.4 356.9 L1196.8 364.4 L1195.0 364.2 L1193.8 359.5 L1194.1 351.5 L1195.9 353.6 Z" fill="#b5e8d2" opacity="0.9"/>
<path d="M1121.0 230.3 L1117.7 228.6 L1117.3 226.7 L1121.9 225.9 L1127.5 226.7 L1124.0 228.5 Z" fill="#b5e8d2" opacity="0.9"/>
<path d="M946.6 196.9 L943.3 197.1 L940.5 196.1 L941.1 194.5 L944.7 193.7 L946.6 195.0 L948.1 195.9 Z" fill="#b5e8d2" opacity="0.9"/>
<path d="M900.4 187.7 L900.1 186.1 L902.5 184.9 L904.4 186.3 L903.4 187.6 Z" fill="#b5e8d2" opacity="0.9"/>
<path d="M841.3 175.0 L839.4 174.3 L839.5 172.4 L840.1 170.9 L842.1 170.0 L842.7 172.1 L842.7 173.8 Z" fill="#b5e8d2" opacity="0.9"/>
<path d="M1004.4 238.6 L1006.7 236.7 L1012.2 236.9 L1009.6 240.7 L1004.8 242.4 Z" fill="#b5e8d2" opacity="0.9"/>
<path d="M975.4 233.9 L974.3 241.0 L970.9 240.9 L969.0 236.1 L971.7 232.8 Z" fill="#b5e8d2" opacity="0.9"/>
<path d="M1079.8 598.0 L1078.7 597.0 L1077.5 594.3 L1078.9 592.3 L1079.9 591.8 L1080.3 594.7 Z" fill="#b5e8d2" opacity="0.9"/>
<path d="M1100.3 600.2 L1097.9 601.0 L1096.1 600.2 L1094.6 599.1 L1097.0 598.4 L1099.5 598.7 Z" fill="#b5e8d2" opacity="0.9"/>
<path d="M980.5 249.2 L982.6 248.3 L983.6 251.0 L982.2 252.8 L980.6 252.8 L979.7 251.1 Z" fill="#b5e8d2" opacity="0.9"/>
<path d="M855.4 224.0 L859.6 224.9 L860.5 227.1 L855.1 227.2 L851.4 225.6 Z" fill="#b5e8d2" opacity="0.9"/>
<path d="M1149.1 198.0 L1151.6 197.8 L1152.5 203.1 L1151.0 208.0 L1148.2 207.4 L1147.4 203.4 L1146.4 198.5 Z" fill="#b5e8d2" opacity="0.9"/>
<path d="M1212.3 400.8 L1216.4 402.0 L1212.8 403.2 L1206.9 403.5 L1206.9 401.3 Z" fill="#b5e8d2" opacity="0.9"/>
<path d="M1114.9 267.4 L1115.7 268.4 L1113.3 269.1 L1109.6 268.9 L1108.4 267.4 L1112.3 267.0 Z" fill="#b5e8d2" opacity="0.9"/>
<path d="M1143.8 272.6 L1141.7 276.4 L1139.0 274.9 L1138.0 272.3 L1140.4 270.5 Z" fill="#b5e8d2" opacity="0.9"/>
<path d="M1127.6 565.1 L1126.4 568.6 L1124.6 568.4 L1124.4 562.7 L1125.3 557.3 L1126.6 561.3 Z" fill="#b5e8d2" opacity="0.9"/>
<path d="M1220.4 530.7 L1220.2 533.5 L1218.1 534.3 L1216.8 533.1 L1216.4 531.7 L1216.3 529.2 L1218.3 530.3 Z" fill="#b5e8d2" opacity="0.9"/>
<path d="M942.3 170.6 L941.5 169.4 L944.9 169.5 L947.8 170.0 L947.3 171.2 L945.0 172.0 L942.6 171.3 Z" fill="#b5e8d2" opacity="0.9"/>
<path d="M1248.1 518.4 L1247.1 519.1 L1245.6 518.2 L1246.8 516.9 L1248.1 517.0 Z" fill="#b5e8d2" opacity="0.9"/>
<path d="M1147.3 198.9 L1147.7 202.9 L1147.8 206.5 L1146.8 206.6 L1145.6 205.2 L1145.9 200.4 Z" fill="#b5e8d2" opacity="0.9"/>
<path d="M1262.2 390.3 L1255.0 390.8 L1251.0 388.6 L1252.8 386.0 L1259.5 385.5 L1263.1 387.6 Z" fill="#b5e8d2" opacity="0.9"/>
<path d="M1205.7 325.9 L1211.3 326.6 L1212.7 328.0 L1214.0 329.7 L1208.6 330.8 L1204.7 329.3 L1202.6 327.7 Z" fill="#b5e8d2" opacity="0.9"/>
<path d="M844.6 162.3 L843.6 158.9 L846.5 158.2 L849.0 158.9 L849.3 162.6 L846.6 163.3 Z" fill="#b5e8d2" opacity="0.9"/>
<path d="M965.0 220.7 L967.3 223.3 L965.3 226.7 L963.4 226.6 L961.2 224.1 L962.8 220.0 Z" fill="#b5e8d2" opacity="0.9"/>
<path d="M832.4 198.0 L837.5 196.0 L844.2 196.9 L844.0 200.7 L838.9 202.8 L833.3 201.3 Z" fill="#b5e8d2" opacity="0.9"/>
<path d="M1193.5 314.0 L1192.3 311.4 L1192.1 308.1 L1194.0 307.1 L1195.6 308.8 L1194.9 311.7 Z" fill="#b5e8d2" opacity="0.9"/>
<path d="M1187.5 540.3 L1190.0 541.1 L1189.4 543.2 L1188.5 544.7 L1187.1 543.6 L1186.0 542.2 Z" fill="#b5e8d2" opacity="0.9"/>
<path d="M1202.3 279.2 L1200.1 278.4 L1200.0 274.3 L1202.7 272.7 L1204.4 275.4 L1204.9 279.5 Z" fill="#b5e8d2" opacity="0.9"/>
<path d="M1097.5 603.9 L1097.4 599.6 L1099.6 597.4 L1102.1 597.9 L1101.8 602.0 L1101.3 604.4 L1099.3 607.0 Z" fill="#b5e8d2" opacity="0.9"/>
<path d="M1032.3 267.5 L1030.6 265.7 L1034.2 264.3 L1038.8 264.3 L1042.2 265.5 L1042.4 267.5 L1037.1 267.6 Z" fill="#b5e8d2" opacity="0.9"/>
<path d="M1235.0 360.2 L1236.9 358.7 L1239.8 359.9 L1239.7 362.0 L1236.7 362.6 L1232.7 362.2 Z" fill="#b5e8d2" opacity="0.9"/>
<path d="M881.2 163.1 L882.8 161.5 L883.7 160.4 L886.5 160.3 L888.4 161.6 L886.6 162.8 L884.4 163.8 Z" fill="#b5e8d2" opacity="0.9"/>
<path d="M1158.8 210.0 L1157.9 206.0 L1161.3 205.2 L1162.9 208.5 L1161.0 211.0 Z" fill="#b5e8d2" opacity="0.9"/>
<path d="M1165.3 251.1 L1167.1 250.3 L1169.4 251.3 L1168.2 254.4 L1165.7 253.7 Z" fill="#b5e8d2" opacity="0.9"/>
<path d="M1113.8 250.5 L1112.5 247.1 L1112.3 241.4 L1113.8 238.2 L1114.8 242.4 L1115.1 247.2 Z" fill="#b5e8d2" opacity="0.9"/>
<path d="M850.9 222.8 L845.7 223.5 L841.1 224.1 L841.3 222.1 L843.1 220.5 L848.6 220.4 Z" fill="#b5e8d2" opacity="0.9"/>
<path d="M846.0 217.7 L840.8 217.9 L837.9 216.7 L840.2 214.9 L845.3 215.7 Z" fill="#b5e8d2" opacity="0.9"/>
<path d="M1197.6 573.0 L1197.9 569.5 L1205.1 568.1 L1206.8 570.9 L1204.6 572.5 Z" fill="#b5e8d2" opacity="0.9"/>
<path d="M1125.0 582.5 L1128.3 581.7 L1131.9 582.5 L1132.5 584.2 L1129.8 585.3 L1126.0 585.5 L1123.9 584.1 Z" fill="#b5e8d2" opacity="0.9"/>
<path d="M948.0 208.7 L943.8 208.0 L941.7 205.8 L945.8 204.5 L948.6 205.6 L950.6 207.0 Z" fill="#b5e8d2" opacity="0.9"/>
<path d="M1140.0 295.7 L1138.6 297.2 L1137.6 294.7 L1138.3 291.8 L1139.6 292.4 Z" fill="#b5e8d2" opacity="0.9"/>
<path d="M979.7 245.1 L977.5 243.0 L981.0 242.4 L984.5 242.7 L982.6 244.8 Z" fill="#b5e8d2" opacity="0.9"/>
<path d="M1219.4 415.5 L1218.1 416.4 L1217.8 413.0 L1218.8 411.9 L1219.9 412.7 Z" fill="#b5e8d2" opacity="0.9"/>
<path d="M1199.9 357.8 L1200.5 360.6 L1197.7 362.5 L1193.6 360.6 L1196.6 358.0 Z" fill="#b5e8d2" opacity="0.9"/>
<path d="M1184.5 284.1 L1182.8 283.0 L1182.0 279.6 L1183.3 277.2 L1184.3 279.8 Z" fill="#b5e8d2" opacity="0.9"/>
<path d="M956.1 207.9 L956.1 210.6 L955.3 211.7 L954.3 211.6 L953.5 210.1 L954.4 208.5 Z" fill="#b5e8d2" opacity="0.9"/>
<path d="M1071.6 238.7 L1069.5 240.2 L1067.5 237.9 L1068.6 233.8 L1071.3 234.6 Z" fill="#b5e8d2" opacity="0.9"/>
<path d="M1112.2 239.9 L1110.9 240.3 L1111.0 236.9 L1111.7 234.3 L1112.5 236.4 L1112.9 238.4 Z" fill="#b5e8d2" opacity="0.9"/>
<path d="M1007.9 218.1 L1004.2 218.9 L1000.3 218.5 L999.4 216.2 L1003.4 214.4 L1008.7 215.5 Z" fill="#b5e8d2" opacity="0.9"/>
<path d="M1243.4 491.5 L1240.1 491.5 L1238.0 490.5 L1239.9 489.6 L1242.6 489.0 L1243.2 490.2 Z" fill="#b5e8d2" opacity="0.9"/>
<path d="M1066.8 180.0 L1066.4 179.0 L1066.4 177.6 L1067.1 176.5 L1068.2 177.0 L1068.0 178.9 L1067.8 180.5 Z" fill="#b5e8d2" opacity="0.9"/>
<path d="M856.3 200.9 L856.1 203.3 L854.1 202.0 L852.1 201.4 L853.0 199.5 L854.4 198.3 L856.4 198.8 Z" fill="#b5e8d2" opacity="0.9"/>
<path d="M868.6 233.6 L870.5 234.1 L869.3 235.0 L867.7 235.2 L865.2 235.3 L864.1 234.1 L866.3 233.2 Z" fill="#b5e8d2" opacity="0.9"/>
<path d="M1193.6 320.6 L1192.0 319.0 L1191.7 315.3 L1191.5 311.2 L1193.0 311.3 L1193.9 312.9 L1194.3 316.1 Z" fill="#b5e8d2" opacity="0.9"/>
<path d="M1187.4 571.8 L1186.3 570.7 L1188.0 570.0 L1189.7 570.1 L1191.5 570.8 L1190.1 571.8 Z" fill="#b5e8d2" opacity="0.9"/>
<path d="M1259.7 510.7 L1260.1 505.2 L1262.1 502.5 L1263.1 507.3 L1262.1 511.0 Z" fill="#b5e8d2" opacity="0.9"/>
<path d="M1184.3 550.4 L1185.8 550.4 L1187.4 551.2 L1186.2 552.9 L1184.8 551.8 Z" fill="#b5e8d2" opacity="0.9"/>
<path d="M968.1 197.0 L968.8 197.7 L968.8 198.9 L968.2 199.9 L967.1 200.0 L967.0 198.3 L967.2 196.8 Z" fill="#b5e8d2" opacity="0.9"/>
<path d="M873.6 183.9 L875.8 185.3 L876.2 187.6 L870.4 187.9 L868.6 185.9 L869.7 184.3 Z" fill="#b5e8d2" opacity="0.9"/>
<path d="M1167.8 238.2 L1168.4 236.8 L1169.6 237.3 L1170.8 238.6 L1169.5 239.9 L1167.6 240.4 Z" fill="#b5e8d2" opacity="0.9"/>
<path d="M1077.2 209.4 L1076.1 210.0 L1073.7 210.4 L1072.5 209.5 L1073.3 208.4 L1076.7 208.4 Z" fill="#b5e8d2" opacity="0.9"/>
<path d="M1204.1 569.5 L1205.0 571.9 L1205.3 574.1 L1205.2 577.4 L1204.2 576.9 L1202.7 576.3 L1202.8 571.4 Z" fill="#b5e8d2" opacity="0.9"/>
<path d="M1078.4 211.5 L1080.7 211.9 L1081.3 212.7 L1080.1 213.1 L1078.3 213.7 L1076.4 213.1 L1076.8 212.2 Z" fill="#b5e8d2" opacity="0.9"/>
<path d="M1212.1 534.0 L1211.6 534.4 L1210.9 534.0 L1210.7 531.9 L1211.5 531.4 L1212.1 531.6 L1212.7 532.8 Z" fill="#b5e8d2" opacity="0.9"/>
<path d="M910.2 241.2 L900.2 242.1 L896.1 239.6 L900.4 237.8 L906.3 238.4 Z" fill="#b5e8d2" opacity="0.9"/>
<path d="M1044.7 216.4 L1039.3 217.3 L1038.0 215.3 L1039.8 214.0 L1043.7 213.5 L1048.2 214.0 L1051.4 216.0 Z" fill="#b5e8d2" opacity="0.9"/>
<path d="M1237.1 461.3 L1232.8 459.4 L1233.8 454.6 L1236.0 451.4 L1239.0 453.5 L1239.2 457.2 Z" fill="#b5e8d2" opacity="0.9"/>
<path d="M1190.9 539.3 L1193.6 541.9 L1194.6 546.5 L1192.1 549.6 L1189.2 549.5 L1187.3 546.0 L1189.1 542.8 Z" fill="#b5e8d2" opacity="0.9"/>
<path d="M1180.8 324.4 L1177.3 322.1 L1176.0 318.9 L1182.4 319.9 L1184.7 322.0 Z" fill="#b5e8d2" opacity="0.9"/>
<path d="M1218.3 312.7 L1218.2 309.4 L1218.7 308.0 L1219.2 309.0 L1219.4 312.1 Z" fill="#b5e8d2" opacity="0.9"/>
<path d="M1274.4 403.6 L1272.4 404.6 L1268.2 404.8 L1264.7 403.4 L1268.6 402.0 L1274.2 401.9 Z" fill="#b5e8d2" opacity="0.9"/>
<path d="M842.5 172.5 L849.4 170.7 L854.7 172.0 L855.8 175.1 L846.8 175.8 Z" fill="#b5e8d2" opacity="0.9"/>
<path d="M1127.6 567.7 L1130.1 567.2 L1132.8 566.8 L1132.9 568.0 L1132.1 568.7 L1130.6 569.4 L1127.9 569.0 Z" fill="#b5e8d2" opacity="0.9"/>
<path d="M1166.5 571.6 L1168.6 571.7 L1170.9 572.7 L1168.9 573.8 L1167.2 575.4 L1164.2 574.4 L1163.4 572.3 Z" fill="#b5e8d2" opacity="0.9"/>
<path d="M1115.5 232.1 L1121.2 230.9 L1126.2 233.1 L1121.3 235.6 L1113.4 234.5 Z" fill="#b5e8d2" opacity="0.9"/>
<path d="M939.6 192.1 L940.0 189.7 L941.5 189.1 L943.4 188.8 L943.3 191.0 L942.9 192.7 L941.3 193.3 Z" fill="#b5e8d2" opacity="0.9"/>
<path d="M1101.1 233.2 L1100.5 235.1 L1098.5 235.4 L1096.5 234.1 L1097.7 232.1 L1099.6 232.1 Z" fill="#b5e8d2" opacity="0.9"/>
<path d="M1216.1 307.3 L1215.0 305.1 L1216.8 302.9 L1220.1 302.9 L1222.6 305.2 L1220.0 307.3 L1218.1 308.5 Z" fill="#b5e8d2" opacity="0.9"/>
<path d="M1120.3 259.9 L1118.3 260.2 L1117.4 259.2 L1117.3 257.4 L1120.3 258.1 L1121.7 259.1 Z" fill="#b5e8d2" opacity="0.9"/>
<path d="M1216.8 523.0 L1220.9 520.4 L1226.7 522.8 L1223.7 524.8 L1216.2 525.7 Z" fill="#b5e8d2" opacity="0.9"/>
<path d="M1232.9 452.0 L1230.8 455.0 L1228.1 450.9 L1230.5 446.4 L1233.4 446.6 Z" fill="#b5e8d2" opacity="0.9"/>
<path d="M891.5 213.4 L890.5 212.0 L894.1 211.5 L897.0 212.2 L896.9 214.0 Z" fill="#b5e8d2" opacity="0.9"/>
<path d="M927.9 201.2 L930.1 200.7 L932.4 201.6 L931.4 203.1 L928.8 203.3 L926.5 202.5 Z" fill="#b5e8d2" opacity="0.9"/>
<path d="M1246.9 403.1 L1243.9 402.0 L1246.3 400.3 L1250.0 400.6 L1250.7 402.0 L1252.3 403.7 L1248.8 404.1 Z" fill="#b5e8d2" opacity="0.9"/>
<path d="M1222.2 337.1 L1222.4 339.4 L1219.1 340.6 L1213.9 341.4 L1211.8 338.2 L1214.2 335.3 L1219.7 334.5 Z" fill="#b5e8d2" opacity="0.9"/>
<path d="M1089.3 258.8 L1091.1 256.5 L1096.2 257.7 L1097.9 259.9 L1091.8 260.7 Z" fill="#b5e8d2" opacity="0.9"/>
<path d="M1234.9 507.6 L1234.4 505.3 L1240.6 505.3 L1242.7 506.8 L1243.7 508.7 L1238.5 508.4 Z" fill="#b5e8d2" opacity="0.9"/>
<path d="M1171.9 319.3 L1171.7 321.1 L1169.2 321.1 L1169.1 319.3 L1168.7 318.0 L1170.4 317.3 L1172.5 317.7 Z" fill="#b5e8d2" opacity="0.9"/>
<path d="M902.5 206.7 L897.9 207.4 L897.2 205.7 L898.8 204.5 L902.1 204.7 L903.9 205.6 Z" fill="#b5e8d2" opacity="0.9"/>
<path d="M938.4 248.3 L940.3 247.1 L942.9 248.2 L941.9 251.2 L938.9 250.7 Z" fill="#b5e8d2" opacity="0.9"/>
<path d="M1232.9 446.7 L1233.8 445.4 L1236.1 444.6 L1239.8 445.4 L1237.1 446.5 Z" fill="#b5e8d2" opacity="0.9"/>
<path d="M1121.6 281.9 L1122.6 281.2 L1125.6 281.0 L1126.8 282.1 L1123.6 282.6 Z" fill="#b5e8d2" opacity="0.9"/>
<path d="M936.4 209.1 L934.6 208.8 L932.5 208.1 L935.0 207.5 L937.8 207.2 L938.8 208.1 L940.1 209.2 Z" fill="#b5e8d2" opacity="0.9"/>
<path d="M944.4 207.3 L941.4 205.2 L941.3 196.8 L944.8 195.8 L946.0 202.0 Z" fill="#b5e8d2" opacity="0.9"/>
<path d="M923.9 186.5 L921.6 186.4 L921.3 184.8 L923.0 183.8 L923.9 185.0 Z" fill="#b5e8d2" opacity="0.9"/>
<path d="M1153.6 201.8 L1154.7 202.5 L1154.5 203.7 L1152.3 203.1 L1150.9 202.1 Z" fill="#b5e8d2" opacity="0.9"/>
<path d="M959.2 220.0 L957.4 220.6 L954.8 220.1 L955.4 219.1 L957.6 218.8 L960.9 219.0 Z" fill="#b5e8d2" opacity="0.9"/>
<path d="M1198.3 351.9 L1197.3 353.8 L1196.2 351.8 L1196.5 349.1 L1198.0 349.8 Z" fill="#b5e8d2" opacity="0.9"/>
<path d="M1215.1 566.3 L1212.3 568.5 L1209.8 564.4 L1212.9 561.5 L1216.8 562.4 Z" fill="#b5e8d2" opacity="0.9"/>
<path d="M1145.7 230.1 L1144.8 231.6 L1144.4 228.7 L1144.1 226.3 L1144.7 224.9 L1145.6 223.8 L1146.0 227.1 Z" fill="#b5e8d2" opacity="0.9"/>
<path d="M1208.1 364.2 L1209.4 364.3 L1209.4 366.6 L1208.4 368.0 L1207.2 367.0 L1207.0 364.8 Z" fill="#b5e8d2" opacity="0.9"/>
<path d="M1254.2 534.5 L1251.3 534.4 L1249.6 533.3 L1252.0 532.2 L1257.3 531.9 L1256.9 533.8 Z" fill="#b5e8d2" opacity="0.9"/>
<path d="M921.1 190.6 L918.0 190.9 L917.0 187.6 L916.2 184.2 L918.7 181.9 L920.8 184.2 L921.1 186.8 Z" fill="#b5e8d2" opacity="0.9"/>
<path d="M1149.7 247.9 L1147.9 247.4 L1147.0 246.8 L1148.2 246.3 L1149.5 246.5 L1151.1 247.0 Z" fill="#b5e8d2" opacity="0.9"/>
<path d="M1138.2 232.3 L1139.7 232.9 L1138.7 233.6 L1136.5 233.6 L1135.5 233.1 L1134.9 232.5 L1136.3 231.9 Z" fill="#b5e8d2" opacity="0.9"/>
<path d="M902.6 220.0 L902.7 223.4 L901.9 225.4 L900.8 224.0 L901.0 219.7 L901.9 218.1 Z" fill="#b5e8d2" opacity="0.9"/>
<path d="M1209.9 374.6 L1209.4 373.1 L1210.0 371.5 L1211.1 371.7 L1211.6 372.9 L1211.8 374.5 L1210.8 374.5 Z" fill="#b5e8d2" opacity="0.9"/>
<path d="M1101.0 268.3 L1098.3 267.0 L1101.3 265.9 L1104.2 265.3 L1107.5 266.3 L1106.2 268.0 L1103.7 269.2 Z" fill="#b5e8d2" opacity="0.9"/>
<path d="M1132.1 257.3 L1133.0 260.3 L1130.1 261.6 L1127.8 260.0 L1127.1 257.5 L1127.8 254.1 L1131.0 255.2 Z" fill="#b5e8d2" opacity="0.9"/>
<path d="M1053.7 235.7 L1048.0 234.6 L1044.6 233.5 L1045.9 231.1 L1052.3 231.9 L1055.3 233.4 Z" fill="#b5e8d2" opacity="0.9"/>
<path d="M1255.6 415.4 L1256.7 416.5 L1257.2 418.3 L1255.8 418.5 L1254.8 417.3 Z" fill="#b5e8d2" opacity="0.9"/>
<path d="M1245.1 433.6 L1247.0 433.6 L1246.7 436.0 L1245.2 437.2 L1244.1 435.8 L1244.1 434.4 Z" fill="#b5e8d2" opacity="0.9"/>
<path d="M1160.0 232.1 L1160.0 230.8 L1160.8 229.6 L1161.9 230.3 L1161.8 231.9 L1161.4 233.2 L1160.3 234.0 Z" fill="#b5e8d2" opacity="0.9"/>
<path d="M1192.4 272.6 L1195.3 274.9 L1188.0 275.4 L1180.7 274.4 L1184.9 271.9 Z" fill="#b5e8d2" opacity="0.9"/>
<path d="M1205.2 369.7 L1207.9 371.0 L1207.3 373.4 L1200.2 372.9 L1198.9 371.1 L1200.4 369.6 Z" fill="#b5e8d2" opacity="0.9"/>
<path d="M1207.3 332.6 L1209.4 332.9 L1209.1 334.1 L1207.9 335.4 L1205.7 334.5 L1205.4 333.2 Z" fill="#b5e8d2" opacity="0.9"/>
<path d="M1214.9 307.8 L1212.4 305.9 L1213.2 301.8 L1218.0 301.6 L1217.8 306.4 Z" fill="#b5e8d2" opacity="0.9"/>
<path d="M1082.5 596.0 L1080.5 595.6 L1080.4 591.0 L1081.2 587.8 L1083.5 586.2 L1083.7 592.1 Z" fill="#b5e8d2" opacity="0.9"/>
<path d="M917.2 205.3 L913.1 205.8 L912.4 203.0 L915.9 202.3 L920.7 203.1 Z" fill="#b5e8d2" opacity="0.9"/>
<path d="M941.0 219.1 L939.1 218.3 L940.5 215.7 L941.8 215.8 L942.8 218.8 Z" fill="#b5e8d2" opacity="0.9"/>
<path d="M1230.6 364.0 L1230.2 368.0 L1227.8 366.0 L1227.0 361.5 L1229.9 361.1 Z" fill="#b5e8d2" opacity="0.9"/>
<path d="M1086.7 204.2 L1085.1 205.1 L1084.7 199.4 L1086.0 195.2 L1087.5 198.0 L1087.4 201.8 Z" fill="#b5e8d2" opacity="0.9"/>
<path d="M914.5 211.1 L917.7 208.5 L920.8 207.2 L922.9 209.0 L923.6 210.9 L919.9 212.0 Z" fill="#b5e8d2" opacity="0.9"/>
<path d="M1215.4 405.1 L1212.4 405.8 L1211.7 404.1 L1213.6 402.9 L1216.9 403.5 Z" fill="#b5e8d2" opacity="0.9"/>
<path d="M1115.7 274.9 L1110.1 275.3 L1104.7 274.4 L1104.6 271.9 L1111.8 271.5 L1117.3 272.7 Z" fill="#b5e8d2" opacity="0.9"/>
<path d="M1124.9 591.7 L1124.5 590.4 L1127.8 589.1 L1131.1 590.3 L1131.7 591.4 L1130.8 592.8 L1126.8 592.9 Z" fill="#b5e8d2" opacity="0.9"/>
<path d="M847.2 183.4 L847.7 185.0 L846.7 186.2 L843.5 186.0 L844.6 183.9 Z" fill="#b5e8d2" opacity="0.9"/>
<path d="M1143.7 272.4 L1145.6 277.2 L1146.5 282.3 L1145.4 288.3 L1143.2 285.0 L1142.3 282.2 L1141.5 276.8 Z" fill="#b5e8d2" opacity="0.9"/>
<path d="M996.7 259.8 L993.2 260.8 L991.1 258.6 L992.5 255.4 L996.5 257.2 Z" fill="#b5e8d2" opacity="0.9"/>
<path d="M997.5 245.1 L990.5 243.7 L990.1 241.1 L997.2 240.6 L1003.6 240.0 L1006.2 242.0 L1002.3 243.4 Z" fill="#b5e8d2" opacity="0.9"/>
<path d="M1261.3 428.8 L1260.3 428.2 L1259.5 427.4 L1259.5 425.7 L1260.6 425.8 L1261.7 425.7 L1261.5 427.3 Z" fill="#b5e8d2" opacity="0.9"/>
<path d="M1222.7 483.1 L1222.9 481.4 L1223.5 479.7 L1225.5 480.1 L1227.0 481.4 L1225.6 482.8 L1224.4 483.4 Z" fill="#b5e8d2" opacity="0.9"/>
<path d="M1131.2 196.5 L1132.1 198.4 L1130.1 200.5 L1126.9 199.3 L1127.8 197.1 L1129.1 195.5 Z" fill="#b5e8d2" opacity="0.9"/>
<path d="M1087.2 605.2 L1089.3 608.1 L1089.8 612.6 L1087.0 612.2 L1086.0 609.3 Z" fill="#b5e8d2" opacity="0.9"/>
<path d="M1262.2 510.4 L1259.3 510.8 L1258.1 509.0 L1258.4 506.6 L1262.2 506.6 L1264.8 508.6 Z" fill="#b5e8d2" opacity="0.9"/>
<path d="M1132.1 288.8 L1132.7 281.5 L1135.4 280.9 L1135.6 289.3 L1134.7 294.1 L1132.8 294.7 Z" fill="#b5e8d2" opacity="0.9"/>
<path d="M1227.9 500.0 L1223.2 501.5 L1220.7 497.2 L1225.5 495.4 L1230.0 496.7 Z" fill="#b5e8d2" opacity="0.9"/>
<path d="M1244.2 443.0 L1245.8 441.5 L1246.2 443.6 L1245.9 444.7 L1244.3 446.1 L1243.2 444.2 Z" fill="#b5e8d2" opacity="0.9"/>
<path d="M1253.6 486.6 L1255.7 485.3 L1257.4 486.8 L1258.9 488.6 L1255.6 488.8 L1253.6 489.0 L1251.5 487.7 Z" fill="#b5e8d2" opacity="0.9"/>
<path d="M1205.0 552.7 L1203.3 553.1 L1202.1 551.1 L1202.4 548.8 L1203.8 547.0 L1205.5 548.3 L1205.8 550.6 Z" fill="#b5e8d2" opacity="0.9"/>
<path d="M1073.6 594.9 L1073.7 601.8 L1071.7 607.5 L1070.6 599.5 L1069.9 591.5 L1072.2 590.4 Z" fill="#b5e8d2" opacity="0.9"/>
<path d="M923.7 175.0 L920.7 175.8 L917.4 176.0 L915.9 174.9 L915.9 173.5 L919.4 173.7 L923.0 173.6 Z" fill="#b5e8d2" opacity="0.9"/>
<path d="M1188.1 359.8 L1189.9 355.2 L1192.0 357.9 L1193.9 360.5 L1193.2 365.5 L1191.1 365.2 L1188.7 365.4 Z" fill="#b5e8d2" opacity="0.9"/>
<path d="M1238.9 374.6 L1239.8 369.4 L1241.7 369.0 L1243.7 374.7 L1240.8 376.1 Z" fill="#b5e8d2" opacity="0.9"/>
<path d="M1044.1 212.7 L1049.0 213.1 L1048.1 215.1 L1046.1 216.4 L1042.5 215.8 L1041.7 214.2 Z" fill="#b5e8d2" opacity="0.9"/>
<path d="M1008.8 258.7 L1009.9 262.0 L1009.8 264.4 L1008.2 265.6 L1005.7 266.0 L1004.7 262.8 L1005.9 259.7 Z" fill="#b5e8d2" opacity="0.9"/>
<path d="M1046.9 236.4 L1043.2 235.7 L1041.3 233.8 L1040.4 230.8 L1043.6 228.8 L1046.3 230.8 L1046.6 233.0 Z" fill="#b5e8d2" opacity="0.9"/>
<path d="M1230.1 372.6 L1233.8 372.6 L1234.7 375.1 L1230.0 375.1 L1228.3 373.7 Z" fill="#b5e8d2" opacity="0.9"/>
<path d="M1197.2 368.0 L1195.8 369.8 L1194.8 366.8 L1194.5 361.7 L1196.3 361.5 L1197.3 364.0 Z" fill="#b5e8d2" opacity="0.9"/>
<path d="M1197.0 327.8 L1195.3 323.8 L1196.2 318.7 L1197.5 317.2 L1199.3 316.7 L1199.1 321.7 L1199.2 327.9 Z" fill="#b5e8d2" opacity="0.9"/>
<path d="M1164.3 262.7 L1161.2 261.7 L1162.6 258.4 L1167.0 258.9 L1167.6 262.2 Z" fill="#b5e8d2" opacity="0.9"/>
<path d="M1025.3 257.0 L1027.3 256.1 L1028.4 257.4 L1028.5 259.6 L1026.2 259.2 Z" fill="#b5e8d2" opacity="0.9"/>
<path d="M1167.3 312.8 L1169.3 314.0 L1171.0 316.0 L1169.8 318.6 L1167.7 320.0 L1165.2 318.3 L1166.2 315.2 Z" fill="#b5e8d2" opacity="0.9"/>
<path d="M1234.5 472.8 L1237.3 472.1 L1239.4 473.1 L1242.0 474.4 L1238.8 475.8 L1235.0 474.9 L1234.5 473.8 Z" fill="#b5e8d2" opacity="0.9"/>
<path d="M940.7 183.1 L938.3 183.4 L936.1 182.7 L936.1 181.2 L939.4 181.0 L943.3 181.6 Z" fill="#b5e8d2" opacity="0.9"/>
<path d="M1226.2 507.3 L1231.2 507.8 L1233.3 508.8 L1232.8 510.5 L1226.6 510.7 L1225.4 508.9 Z" fill="#b5e8d2" opacity="0.9"/>
<path d="M1177.7 265.1 L1175.0 265.0 L1173.2 263.3 L1174.2 260.8 L1176.4 261.0 L1179.3 262.1 Z" fill="#b5e8d2" opacity="0.9"/>
<path d="M1110.0 583.1 L1109.8 584.0 L1108.0 584.3 L1106.7 583.8 L1105.6 582.9 L1108.1 582.5 Z" fill="#b5e8d2" opacity="0.9"/>
<path d="M1116.6 594.5 L1116.6 590.6 L1117.2 587.5 L1118.5 588.6 L1118.4 592.0 L1117.9 594.6 Z" fill="#b5e8d2" opacity="0.9"/>
<path d="M1091.4 210.3 L1094.7 212.2 L1096.0 215.0 L1092.3 215.5 L1090.8 213.5 Z" fill="#b5e8d2" opacity="0.9"/>
<path d="M1173.3 306.6 L1174.0 309.5 L1173.9 312.9 L1172.8 312.3 L1172.3 309.2 Z" fill="#b5e8d2" opacity="0.9"/>
<path d="M1194.3 345.8 L1193.2 354.4 L1189.9 353.6 L1190.2 346.5 L1191.7 339.0 Z" fill="#b5e8d2" opacity="0.9"/>
<path d="M1090.6 181.4 L1093.5 180.4 L1097.0 180.8 L1099.4 182.7 L1093.1 182.7 Z" fill="#b5e8d2" opacity="0.9"/>
<path d="M1119.3 204.2 L1117.6 205.9 L1115.2 205.3 L1116.0 202.7 L1118.6 200.3 Z" fill="#b5e8d2" opacity="0.9"/>
<path d="M1202.1 527.4 L1206.6 527.8 L1205.9 530.5 L1202.1 531.8 L1199.7 530.1 L1198.0 527.9 Z" fill="#b5e8d2" opacity="0.9"/>
<path d="M1108.8 182.4 L1109.0 185.6 L1107.7 185.5 L1106.9 183.3 L1107.2 180.0 L1108.4 180.0 Z" fill="#b5e8d2" opacity="0.9"/>
<path d="M962.4 247.9 L961.8 242.6 L964.3 240.6 L965.6 245.1 L965.3 249.4 L963.4 252.8 Z" fill="#b5e8d2" opacity="0.9"/>
<path d="M1203.0 565.0 L1204.1 559.0 L1207.6 557.7 L1209.8 563.3 L1206.8 569.0 Z" fill="#b5e8d2" opacity="0.9"/>
<path d="M1001.5 215.6 L1006.4 215.4 L1011.5 215.8 L1010.9 217.7 L1008.9 219.7 L1003.9 218.5 L1001.2 217.4 Z" fill="#b5e8d2" opacity="0.9"/>
<path d="M924.1 206.6 L925.2 208.6 L925.4 211.5 L923.6 212.3 L923.5 209.2 Z" fill="#b5e8d2" opacity="0.9"/>
<path d="M1268.4 481.3 L1267.6 479.0 L1268.7 477.5 L1269.5 475.5 L1270.9 476.7 L1271.0 479.4 L1269.9 480.7 Z" fill="#b5e8d2" opacity="0.9"/>
<path d="M1190.5 541.1 L1189.6 542.6 L1188.5 541.2 L1188.3 537.7 L1189.7 536.3 L1190.9 538.2 Z" fill="#b5e8d2" opacity="0.9"/>
<path d="M1132.6 609.6 L1133.3 608.2 L1134.9 608.9 L1135.0 610.2 L1134.2 610.9 L1132.9 612.0 L1132.4 610.5 Z" fill="#b5e8d2" opacity="0.9"/>
<path d="M1177.0 303.7 L1184.0 304.7 L1184.7 307.8 L1180.6 310.0 L1175.5 308.6 L1174.5 306.5 Z" fill="#b5e8d2" opacity="0.9"/>
<path d="M1154.6 232.5 L1157.7 231.1 L1160.9 234.7 L1157.1 237.1 L1154.4 235.7 Z" fill="#b5e8d2" opacity="0.9"/>
<path d="M1102.9 199.9 L1104.6 194.9 L1105.9 200.5 L1106.1 209.6 L1103.4 207.0 Z" fill="#b5e8d2" opacity="0.9"/>
<path d="M1142.4 193.6 L1141.3 196.1 L1138.6 194.9 L1139.8 192.2 L1141.6 191.5 Z" fill="#b5e8d2" opacity="0.9"/>
<path d="M1115.2 562.9 L1118.0 561.7 L1122.4 563.0 L1118.8 564.8 L1116.0 564.7 Z" fill="#b5e8d2" opacity="0.9"/>
<path d="M1192.8 310.2 L1191.9 306.7 L1193.7 304.7 L1195.3 304.8 L1196.6 305.9 L1197.9 309.0 L1195.2 308.9 Z" fill="#b5e8d2" opacity="0.9"/>
<path d="M1262.9 411.3 L1259.3 410.8 L1257.1 410.0 L1256.6 408.5 L1260.9 407.4 L1264.4 408.7 L1265.9 410.1 Z" fill="#b5e8d2" opacity="0.9"/>
<path d="M959.6 230.1 L956.1 227.9 L963.5 226.5 L968.9 228.8 L964.9 231.0 Z" fill="#b5e8d2" opacity="0.9"/>
<path d="M1125.0 563.3 L1124.2 560.3 L1130.4 558.8 L1137.5 560.6 L1133.1 563.3 Z" fill="#b5e8d2" opacity="0.9"/>
<path d="M1091.0 600.8 L1091.7 599.8 L1094.1 600.1 L1096.1 600.5 L1095.7 601.8 L1092.5 601.6 Z" fill="#b5e8d2" opacity="0.9"/>
<path d="M1117.8 600.2 L1112.8 599.0 L1113.7 595.4 L1118.9 594.1 L1124.0 595.1 L1122.6 598.0 L1121.1 599.5 Z" fill="#b5e8d2" opacity="0.9"/>
<path d="M953.5 229.3 L952.8 228.0 L953.1 224.8 L953.8 224.7 L954.5 226.1 L954.3 229.1 Z" fill="#b5e8d2" opacity="0.9"/>
<path d="M1147.9 292.4 L1147.0 289.7 L1151.7 288.9 L1156.2 289.1 L1157.5 291.4 L1152.9 292.0 Z" fill="#b5e8d2" opacity="0.9"/>
<path d="M998.3 226.8 L995.8 224.8 L1002.4 224.6 L1004.7 225.6 L1004.9 227.5 Z" fill="#b5e8d2" opacity="0.9"/>
<path d="M1138.2 236.4 L1138.3 234.2 L1141.6 233.7 L1143.8 234.7 L1147.3 236.4 L1144.0 238.5 L1139.6 238.7 Z" fill="#b5e8d2" opacity="0.9"/>
<path d="M964.8 199.5 L963.7 203.3 L960.8 205.5 L959.0 202.4 L958.5 199.0 L961.6 197.6 Z" fill="#b5e8d2" opacity="0.9"/>
<path d="M1269.5 417.9 L1270.2 419.0 L1269.2 419.6 L1267.1 420.3 L1265.4 419.3 L1266.8 418.5 Z" fill="#b5e8d2" opacity="0.9"/>
<path d="M893.2 230.1 L892.6 227.4 L893.9 225.2 L896.6 226.2 L895.6 229.3 Z" fill="#b5e8d2" opacity="0.9"/>
<path d="M1186.6 313.4 L1188.3 314.1 L1188.8 315.1 L1189.4 316.6 L1187.7 316.9 L1185.9 316.7 L1186.3 315.1 Z" fill="#b5e8d2" opacity="0.9"/>
<path d="M896.8 202.8 L897.5 200.6 L899.6 200.4 L902.4 200.1 L903.0 203.1 L900.3 203.8 L898.1 205.0 Z" fill="#b5e8d2" opacity="0.9"/>
<path d="M1090.5 267.2 L1081.5 268.7 L1078.6 266.3 L1079.3 264.3 L1085.5 265.0 Z" fill="#b5e8d2" opacity="0.9"/>
<path d="M1216.3 581.1 L1213.3 577.3 L1215.0 573.3 L1220.1 573.1 L1219.8 577.9 Z" fill="#b5e8d2" opacity="0.9"/>
<path d="M841.0 202.4 L841.0 199.6 L841.9 197.9 L843.3 199.2 L844.0 201.9 Z" fill="#b5e8d2" opacity="0.9"/>
<path d="M1229.7 514.0 L1227.3 516.1 L1223.2 516.9 L1223.5 512.1 L1226.0 510.5 L1228.3 511.2 Z" fill="#b5e8d2" opacity="0.9"/>
<path d="M857.8 172.2 L854.6 171.3 L853.9 169.3 L853.8 166.2 L858.7 166.3 L863.1 168.0 L860.1 170.6 Z" fill="#b5e8d2" opacity="0.9"/>
<path d="M897.3 224.6 L898.6 228.5 L896.5 231.2 L893.8 229.1 L895.1 223.8 Z" fill="#b5e8d2" opacity="0.9"/>
<path d="M1260.5 504.6 L1261.5 501.4 L1264.9 498.5 L1267.4 503.4 L1263.9 506.6 Z" fill="#b5e8d2" opacity="0.9"/>
<path d="M836.2 231.8 L841.3 232.3 L847.7 233.6 L842.7 235.7 L835.7 236.8 L835.9 233.9 Z" fill="#b5e8d2" opacity="0.9"/>
<path d="M1263.8 408.4 L1263.5 410.9 L1260.7 413.0 L1256.8 411.2 L1257.4 409.4 Z" fill="#b5e8d2" opacity="0.9"/>
<path d="M1107.4 602.9 L1110.4 601.5 L1116.1 601.8 L1116.7 603.9 L1110.0 605.0 Z" fill="#b5e8d2" opacity="0.9"/>
<path d="M942.0 193.9 L943.7 191.8 L946.4 190.5 L947.2 193.2 L945.1 194.6 Z" fill="#b5e8d2" opacity="0.9"/>
<path d="M1196.1 523.3 L1197.5 522.7 L1199.8 522.8 L1200.7 523.6 L1200.1 524.4 L1197.8 524.4 L1195.7 524.1 Z" fill="#b5e8d2" opacity="0.9"/>
<path d="M1127.7 658.4 L1124.8 660.5 L1122.2 659.7 L1120.4 657.0 L1124.4 657.0 Z" fill="#f5f1e6"/>
<path d="M1272.4 508.1 L1272.9 511.0 L1271.8 512.5 L1270.6 512.4 L1269.4 509.7 L1270.8 506.9 Z" fill="#f5f1e6"/>
<path d="M1287.4 665.8 L1282.8 663.4 L1284.6 660.4 L1290.7 659.9 L1292.9 663.5 Z" fill="#f5f1e6"/>
<path d="M872.9 146.4 L868.2 145.2 L868.8 143.2 L874.1 142.9 L878.3 144.8 Z" fill="#f5f1e6"/>
<path d="M1270.6 508.6 L1269.8 505.8 L1271.4 504.8 L1272.8 505.5 L1272.4 508.0 Z" fill="#f5f1e6"/>
<path d="M1268.8 665.5 L1267.4 667.2 L1266.0 665.0 L1266.1 661.5 L1268.1 662.3 L1268.9 663.5 Z" fill="#f5f1e6"/>
<path d="M1307.1 433.2 L1304.3 432.5 L1304.8 428.2 L1306.4 426.7 L1307.9 429.2 Z" fill="#f5f1e6"/>
<path d="M1081.4 113.4 L1087.3 112.0 L1093.4 113.7 L1091.3 117.3 L1081.9 116.4 Z" fill="#f5f1e6"/>
<path d="M1284.8 501.6 L1283.4 500.0 L1283.8 498.0 L1285.2 496.3 L1287.5 497.5 L1286.3 500.2 Z" fill="#f5f1e6"/>
<path d="M1103.5 605.0 L1106.2 603.8 L1110.0 604.6 L1111.7 605.7 L1109.5 606.6 L1106.5 607.1 L1102.2 606.5 Z" fill="#f5f1e6"/>
<path d="M1020.2 211.9 L1021.8 210.4 L1024.1 210.0 L1025.4 212.2 L1024.7 214.8 L1022.5 215.0 L1019.7 214.8 Z" fill="#f5f1e6"/>
<path d="M1277.3 554.5 L1281.0 553.0 L1283.2 557.0 L1280.5 560.3 L1276.8 559.0 Z" fill="#f5f1e6"/>
<path d="M906.3 157.1 L910.7 156.4 L915.9 155.5 L916.9 157.4 L919.1 159.7 L912.1 159.9 L905.5 159.4 Z" fill="#f5f1e6"/>
<path d="M954.1 190.3 L954.5 188.8 L954.3 186.7 L959.0 186.9 L960.1 188.5 L959.7 189.6 L957.5 190.3 Z" fill="#f5f1e6"/>
<path d="M1272.4 370.7 L1274.5 370.7 L1276.5 371.2 L1275.4 372.3 L1274.2 373.1 L1271.9 372.8 L1271.7 371.7 Z" fill="#f5f1e6"/>
<path d="M1065.7 160.3 L1067.7 159.8 L1069.2 161.6 L1068.2 163.6 L1067.2 164.1 L1065.9 164.3 L1065.1 162.6 Z" fill="#f5f1e6"/>
<path d="M864.3 138.1 L865.0 135.4 L866.8 136.8 L867.6 140.0 L865.0 141.3 Z" fill="#f5f1e6"/>
<path d="M1104.9 156.1 L1106.5 154.0 L1108.7 155.1 L1108.0 161.0 L1105.3 161.4 Z" fill="#f5f1e6"/>
<path d="M1098.5 685.9 L1099.4 684.7 L1099.8 687.2 L1100.3 689.7 L1099.6 692.2 L1098.5 691.3 L1098.0 688.4 Z" fill="#f5f1e6"/>
<path d="M1333.7 518.2 L1334.7 520.8 L1335.8 522.6 L1333.4 524.4 L1330.7 522.9 L1328.8 521.4 L1330.2 519.4 Z" fill="#f5f1e6"/>
<path d="M1195.2 689.7 L1197.1 689.0 L1199.6 687.9 L1200.6 689.4 L1202.4 690.7 L1198.8 690.7 L1195.9 691.0 Z" fill="#f5f1e6"/>
<path d="M1204.5 270.9 L1204.2 268.5 L1205.7 267.0 L1208.4 266.3 L1210.6 267.6 L1211.3 269.4 L1208.8 271.3 Z" fill="#f5f1e6"/>
<path d="M1280.8 573.1 L1275.8 572.9 L1270.8 571.3 L1273.6 568.3 L1279.2 568.4 L1283.1 570.4 Z" fill="#f5f1e6"/>
<path d="M1244.9 609.2 L1245.4 610.8 L1240.6 610.1 L1235.8 609.3 L1240.0 608.2 L1244.0 608.0 Z" fill="#f5f1e6"/>
<path d="M1240.0 583.0 L1241.2 588.1 L1238.8 591.0 L1237.0 588.5 L1236.8 584.1 Z" fill="#f5f1e6"/>
<path d="M852.6 145.9 L849.1 143.2 L853.0 140.6 L856.3 142.4 L859.4 144.4 L856.3 146.8 Z" fill="#f5f1e6"/>
<path d="M1078.5 117.9 L1083.3 118.0 L1083.2 120.6 L1081.7 122.7 L1078.0 121.9 L1075.2 119.9 Z" fill="#f5f1e6"/>
<path d="M1267.5 549.5 L1268.1 546.0 L1269.7 544.3 L1269.9 549.2 L1269.8 554.0 L1267.8 554.8 Z" fill="#f5f1e6"/>
<path d="M1140.6 647.0 L1143.6 648.1 L1144.6 649.1 L1144.4 650.8 L1142.0 650.4 L1139.1 649.4 Z" fill="#f5f1e6"/>
<path d="M958.5 174.1 L959.9 175.6 L957.1 177.5 L953.2 176.0 L950.3 174.8 L952.8 173.4 L956.3 173.0 Z" fill="#f5f1e6"/>
<path d="M1155.7 678.9 L1153.3 678.0 L1154.9 676.9 L1158.0 676.4 L1161.1 677.4 L1159.0 678.6 Z" fill="#f5f1e6"/>
<path d="M1311.6 360.2 L1310.1 361.3 L1307.1 360.8 L1307.3 359.1 L1308.9 357.9 L1312.1 357.5 L1312.5 359.3 Z" fill="#f5f1e6"/>
<path d="M1104.4 629.5 L1102.8 628.9 L1102.6 627.8 L1104.0 626.8 L1105.7 627.5 L1107.7 628.2 L1105.8 629.0 Z" fill="#f5f1e6"/>
<path d="M1305.6 436.5 L1303.6 433.2 L1304.2 429.3 L1305.6 428.5 L1306.9 431.6 Z" fill="#f5f1e6"/>
<path d="M1146.6 664.6 L1143.4 663.7 L1146.2 662.1 L1150.6 662.6 L1149.7 664.5 Z" fill="#f5f1e6"/>
<path d="M1297.5 530.9 L1301.7 531.5 L1302.2 532.9 L1299.9 534.3 L1295.6 533.7 L1292.4 532.9 L1294.2 531.7 Z" fill="#f5f1e6"/>
<path d="M1110.6 670.7 L1110.8 666.5 L1113.6 665.7 L1115.4 669.0 L1115.3 673.2 L1113.1 675.1 L1110.9 674.2 Z" fill="#f5f1e6"/>
<path d="M1071.3 672.9 L1069.8 673.8 L1068.3 673.3 L1067.7 670.9 L1069.3 669.6 L1070.7 670.9 Z" fill="#f5f1e6"/>
<path d="M847.1 148.1 L842.5 150.1 L837.7 148.0 L840.3 146.0 L844.5 144.4 L848.0 146.3 Z" fill="#f5f1e6"/>
<path d="M1109.0 139.0 L1113.8 138.3 L1117.6 139.9 L1115.8 143.1 L1109.0 142.1 Z" fill="#f5f1e6"/>
<path d="M1085.0 101.3 L1086.6 102.0 L1087.8 103.6 L1087.0 106.0 L1085.0 105.8 L1084.3 103.6 Z" fill="#f5f1e6"/>
<path d="M1186.6 605.4 L1180.4 605.9 L1174.2 605.0 L1173.7 601.5 L1179.2 600.3 L1183.5 600.3 L1187.7 602.1 Z" fill="#f5f1e6"/>
<path d="M1132.7 664.2 L1136.7 663.1 L1139.3 664.2 L1138.4 665.9 L1135.7 665.9 Z" fill="#f5f1e6"/>
<path d="M1284.7 642.3 L1282.5 643.1 L1279.8 643.0 L1278.1 642.0 L1279.7 640.6 L1282.8 641.3 Z" fill="#f5f1e6"/>
<path d="M1352.7 449.0 L1354.5 448.2 L1355.2 451.6 L1354.9 454.8 L1353.5 456.1 L1350.8 456.6 L1350.1 450.7 Z" fill="#f5f1e6"/>
<path d="M1280.0 485.3 L1278.3 485.7 L1276.7 485.3 L1276.9 479.7 L1278.3 479.5 L1279.1 480.8 Z" fill="#f5f1e6"/>
<path d="M1296.7 557.5 L1300.3 557.1 L1303.0 557.6 L1306.0 559.1 L1302.7 560.4 L1299.1 560.5 L1295.8 559.4 Z" fill="#f5f1e6"/>
<path d="M1076.3 97.2 L1077.4 97.6 L1077.6 100.2 L1076.5 101.7 L1075.8 99.4 Z" fill="#f5f1e6"/>
<path d="M1167.0 663.5 L1169.5 665.5 L1167.1 668.1 L1164.7 666.9 L1164.6 663.8 Z" fill="#f5f1e6"/>
<path d="M1219.2 629.2 L1216.5 629.6 L1214.7 626.8 L1216.8 624.3 L1220.2 623.7 L1220.9 627.2 Z" fill="#f5f1e6"/>
<path d="M1278.0 541.1 L1277.4 544.8 L1276.1 549.9 L1274.0 545.4 L1273.3 542.2 L1275.4 540.6 Z" fill="#f5f1e6"/>
<path d="M1287.4 467.4 L1289.7 464.7 L1291.9 466.7 L1292.5 472.8 L1290.8 475.6 L1289.4 476.3 L1288.7 473.0 Z" fill="#f5f1e6"/>
<path d="M1319.1 567.5 L1317.0 568.3 L1317.3 563.9 L1318.4 560.4 L1320.0 563.9 Z" fill="#f5f1e6"/>
<path d="M1253.4 294.2 L1254.8 291.5 L1255.8 294.5 L1255.6 297.8 L1253.9 298.0 Z" fill="#f5f1e6"/>
<path d="M1135.5 617.7 L1135.8 619.4 L1132.9 619.9 L1131.5 618.8 L1130.6 617.5 L1133.1 617.0 Z" fill="#f5f1e6"/>
<path d="M1230.8 624.0 L1227.5 624.9 L1225.4 623.0 L1225.7 621.3 L1226.5 618.7 L1229.9 619.6 L1231.7 621.6 Z" fill="#f5f1e6"/>
<path d="M1297.6 487.9 L1302.1 487.6 L1305.9 487.4 L1305.8 489.8 L1306.2 492.8 L1301.6 491.8 L1297.3 490.9 Z" fill="#f5f1e6"/>
<path d="M1311.6 445.9 L1312.1 447.6 L1309.1 448.7 L1304.7 448.8 L1300.7 447.7 L1300.6 445.5 L1306.9 444.0 Z" fill="#f5f1e6"/>
<path d="M1129.8 659.2 L1130.6 660.7 L1131.6 664.8 L1129.8 665.5 L1128.1 667.3 L1127.8 662.2 L1128.6 659.1 Z" fill="#f5f1e6"/>
<path d="M1105.6 648.7 L1107.8 647.6 L1108.9 650.4 L1107.7 653.1 L1106.0 651.4 Z" fill="#f5f1e6"/>
<path d="M1235.2 579.0 L1232.0 580.2 L1227.1 580.0 L1224.7 577.1 L1230.7 576.3 L1236.8 576.2 Z" fill="#f5f1e6"/>
<path d="M1333.2 470.0 L1332.3 467.1 L1331.6 464.2 L1333.2 462.6 L1334.9 462.4 L1335.8 465.7 L1334.9 468.6 Z" fill="#f5f1e6"/>
<path d="M1340.8 407.5 L1340.3 410.1 L1334.3 409.6 L1333.0 407.5 L1336.9 406.8 Z" fill="#f5f1e6"/>
<path d="M1210.9 604.4 L1208.7 603.9 L1207.1 602.1 L1209.7 600.9 L1213.0 600.6 L1213.3 602.6 L1214.1 604.5 Z" fill="#f5f1e6"/>
<path d="M1299.3 344.3 L1301.2 340.5 L1305.6 340.9 L1308.6 342.4 L1307.6 344.9 L1306.4 348.1 L1302.5 346.9 Z" fill="#f5f1e6"/>
<path d="M1253.8 294.3 L1251.8 300.2 L1249.6 298.3 L1248.7 291.5 L1251.6 287.1 Z" fill="#f5f1e6"/>
<path d="M1077.5 656.7 L1080.8 651.8 L1083.4 656.4 L1083.8 660.6 L1080.2 660.2 Z" fill="#f5f1e6"/>
<path d="M1282.0 491.4 L1281.5 495.7 L1276.6 496.5 L1273.4 495.6 L1271.8 493.3 L1273.0 490.4 L1277.3 489.3 Z" fill="#f5f1e6"/>
<path d="M981.2 183.3 L984.8 185.0 L983.2 188.5 L980.3 190.8 L979.3 186.7 Z" fill="#f5f1e6"/>
<path d="M908.1 107.4 L903.4 107.5 L900.3 106.4 L900.6 104.8 L905.1 103.7 L909.2 104.8 L911.1 106.2 Z" fill="#f5f1e6"/>
<path d="M1257.0 563.9 L1254.0 564.9 L1251.1 563.6 L1251.6 561.9 L1255.8 561.6 L1257.7 562.8 Z" fill="#f5f1e6"/>
<path d="M1191.7 630.1 L1194.4 629.4 L1196.0 631.4 L1196.5 633.7 L1194.5 635.1 L1192.4 634.4 L1191.8 632.6 Z" fill="#f5f1e6"/>
<path d="M954.7 172.2 L960.1 173.0 L960.0 176.3 L959.0 179.6 L954.1 178.7 L951.2 175.4 Z" fill="#f5f1e6"/>
<path d="M1270.4 360.2 L1269.4 363.3 L1267.9 363.8 L1267.1 360.6 L1267.7 357.0 L1269.5 356.1 Z" fill="#f5f1e6"/>
<path d="M1087.9 136.7 L1087.9 137.4 L1086.0 137.7 L1083.6 137.6 L1083.1 136.9 L1083.8 136.0 L1087.2 135.7 Z" fill="#f5f1e6"/>
<path d="M874.2 110.8 L874.5 108.3 L875.9 107.5 L876.8 110.2 L875.8 112.1 L874.6 113.7 Z" fill="#f5f1e6"/>
<path d="M1327.7 374.3 L1328.5 377.8 L1326.5 379.2 L1325.2 376.1 L1326.5 374.0 Z" fill="#f5f1e6"/>
<path d="M1222.1 572.4 L1221.3 568.0 L1222.0 563.8 L1223.5 565.9 L1224.2 570.6 Z" fill="#f5f1e6"/>
<path d="M1212.2 591.3 L1217.6 591.8 L1217.9 593.8 L1214.8 594.9 L1212.0 594.1 L1209.6 593.0 Z" fill="#f5f1e6"/>
<path d="M1087.0 149.9 L1089.4 147.2 L1093.2 146.3 L1096.7 147.6 L1098.2 150.5 L1094.8 152.8 L1090.8 151.6 Z" fill="#f5f1e6"/>
<path d="M1249.0 318.6 L1244.8 319.9 L1239.8 321.3 L1237.1 318.4 L1240.3 315.6 L1246.0 316.3 Z" fill="#f5f1e6"/>
<path d="M1114.7 645.9 L1110.5 648.9 L1104.4 647.4 L1105.3 644.9 L1110.4 642.8 Z" fill="#f5f1e6"/>
<path d="M1291.1 524.5 L1292.5 523.0 L1297.0 523.0 L1299.7 523.9 L1298.1 524.9 L1294.6 525.6 Z" fill="#f5f1e6"/>
<path d="M1279.0 452.7 L1277.7 444.3 L1278.6 436.2 L1281.2 437.2 L1281.6 448.0 Z" fill="#f5f1e6"/>
<path d="M1273.5 309.4 L1274.1 313.2 L1272.2 313.8 L1271.1 312.1 L1270.2 308.3 L1272.3 306.9 Z" fill="#f5f1e6"/>
<path d="M1131.1 653.6 L1130.0 654.9 L1128.3 655.9 L1125.5 655.3 L1124.7 653.9 L1127.7 653.0 Z" fill="#f5f1e6"/>
<path d="M1204.6 264.5 L1204.1 261.9 L1205.2 259.6 L1207.1 261.0 L1206.4 263.6 Z" fill="#f5f1e6"/>
<path d="M1345.2 460.9 L1346.8 463.0 L1342.7 463.6 L1339.9 461.8 L1342.1 459.1 Z" fill="#f5f1e6"/>
<path d="M1292.9 637.4 L1292.4 633.2 L1295.8 630.7 L1299.4 632.6 L1300.1 637.0 L1298.3 640.8 L1294.8 640.1 Z" fill="#f5f1e6"/>
<path d="M1314.8 529.7 L1313.0 526.7 L1314.2 524.1 L1318.2 525.2 L1319.9 528.0 Z" fill="#f5f1e6"/>
<path d="M1118.0 351.3 L1117.8 354.1 L1110.1 354.2 L1102.5 353.7 L1104.1 351.0 L1111.1 349.9 Z" fill="#f3efe3"/>
<path d="M1092.3 437.7 L1083.9 437.9 L1082.8 434.8 L1080.7 431.1 L1090.5 430.3 L1100.3 431.7 L1101.0 436.0 Z" fill="#f3efe3"/>
<path d="M1136.3 362.2 L1141.0 364.0 L1145.9 365.5 L1141.8 367.7 L1133.9 367.9 L1128.7 366.0 L1133.5 364.4 Z" fill="#f3efe3"/>
<path d="M885.7 472.8 L879.4 472.7 L874.2 473.0 L873.3 471.0 L876.9 470.1 L881.1 468.9 L886.0 470.3 Z" fill="#f3efe3"/>
<path d="M936.5 337.4 L939.7 344.8 L930.2 348.6 L919.9 344.7 L927.6 339.7 Z" fill="#f3efe3"/>
<path d="M972.1 323.1 L976.8 331.4 L973.7 341.4 L970.0 341.2 L968.5 331.8 Z" fill="#f3efe3"/>
<path d="M1193.4 515.4 L1186.5 519.1 L1176.4 517.3 L1179.9 514.2 L1186.1 512.7 Z" fill="#f3efe3"/>
<path d="M1063.8 320.9 L1061.5 322.6 L1058.4 322.2 L1056.8 319.8 L1059.1 316.8 L1064.9 316.6 Z" fill="#f3efe3"/>
<path d="M904.5 345.4 L910.4 345.8 L910.4 351.4 L903.9 356.3 L900.2 349.2 Z" fill="#f3efe3"/>
<path d="M1081.1 375.7 L1076.4 376.5 L1069.1 374.6 L1072.5 366.3 L1078.3 366.6 L1083.0 369.4 Z" fill="#f3efe3"/>
<path d="M1002.7 340.1 L998.7 345.6 L991.7 341.5 L987.4 335.3 L996.8 332.0 L1003.8 335.5 Z" fill="#f3efe3"/>
<path d="M913.9 412.8 L916.9 417.6 L912.4 422.1 L906.9 419.4 L905.3 412.4 L910.4 407.5 Z" fill="#f3efe3"/>
<path d="M1088.7 532.3 L1090.2 530.2 L1091.0 534.3 L1091.7 539.5 L1089.6 539.7 L1088.0 539.0 L1087.5 534.8 Z" fill="#f3efe3"/>
<path d="M1202.8 503.0 L1201.4 506.3 L1197.9 508.4 L1189.9 508.4 L1191.4 504.8 L1194.8 501.6 Z" fill="#f3efe3"/>
<path d="M982.2 405.0 L979.2 409.8 L970.4 409.3 L967.2 402.9 L972.6 398.2 L979.9 396.3 L986.0 400.4 Z" fill="#f3efe3"/>
<path d="M1124.1 384.2 L1130.4 385.1 L1131.6 396.4 L1129.0 406.7 L1123.1 404.1 L1122.1 394.1 Z" fill="#f3efe3"/>
<path d="M983.3 497.5 L992.7 497.6 L993.9 500.5 L987.5 501.3 L980.7 500.4 Z" fill="#f3efe3"/>
<path d="M1133.2 334.0 L1124.9 332.7 L1126.8 328.4 L1133.0 326.3 L1139.8 330.0 Z" fill="#f3efe3"/>
<path d="M1080.8 356.8 L1088.2 354.4 L1093.3 359.0 L1088.6 363.0 L1081.8 362.2 Z" fill="#f3efe3"/>
<path d="M1133.2 409.8 L1124.8 410.3 L1118.9 409.2 L1120.2 406.8 L1124.6 405.1 L1131.7 406.2 Z" fill="#f3efe3"/>
<path d="M1138.1 435.8 L1139.5 425.6 L1142.2 432.4 L1145.7 438.9 L1142.1 445.3 L1140.1 447.0 L1135.8 447.3 Z" fill="#f3efe3"/>
<path d="M1004.6 455.0 L1002.1 462.2 L999.0 458.5 L999.8 450.2 L1003.2 442.7 Z" fill="#f3efe3"/>
<path d="M1161.2 362.1 L1162.2 364.1 L1158.5 364.7 L1154.0 365.7 L1151.1 363.3 L1153.5 360.9 L1158.3 361.0 Z" fill="#f3efe3"/>
<path d="M1008.0 458.2 L1013.0 461.1 L1011.9 464.3 L1003.9 463.0 L998.1 460.2 Z" fill="#f3efe3"/>
<path d="M1142.0 521.8 L1135.0 524.1 L1128.8 521.8 L1126.2 519.1 L1129.8 516.7 L1137.3 514.2 L1139.4 518.4 Z" fill="#f3efe3"/>
<path d="M913.3 428.8 L908.0 425.9 L908.2 407.8 L912.0 399.1 L915.3 411.6 Z" fill="#f3efe3"/>
<path d="M1113.8 546.4 L1117.0 549.5 L1115.0 552.5 L1109.3 552.4 L1107.6 548.1 Z" fill="#f3efe3"/>
<path d="M1065.7 341.5 L1068.8 343.6 L1069.4 349.4 L1065.2 349.2 L1060.9 348.7 L1061.9 342.5 Z" fill="#f3efe3"/>
<path d="M1079.5 408.5 L1080.6 413.0 L1074.9 413.4 L1069.9 410.5 L1073.5 406.5 L1077.5 405.8 Z" fill="#f3efe3"/>
<path d="M896.3 309.8 L894.4 305.7 L894.2 301.6 L896.7 302.0 L898.9 305.4 Z" fill="#f3efe3"/>
<path d="M1148.4 424.2 L1150.9 424.4 L1151.4 427.4 L1150.9 430.4 L1148.4 432.2 L1146.4 429.4 L1147.4 426.6 Z" fill="#f3efe3"/>
<path d="M976.9 459.8 L976.7 452.9 L978.8 454.3 L979.9 457.8 L979.3 462.9 L977.5 467.0 Z" fill="#f3efe3"/>
<path d="M1142.5 527.7 L1142.1 531.8 L1137.0 533.2 L1131.7 530.9 L1135.4 527.3 Z" fill="#f3efe3"/>
<path d="M966.1 495.5 L971.7 488.9 L980.1 490.4 L981.0 496.0 L979.5 501.6 L972.0 501.0 Z" fill="#f3efe3"/>
<path d="M1045.9 412.4 L1047.0 403.6 L1049.0 396.8 L1051.5 402.5 L1051.5 410.8 L1049.1 412.1 Z" fill="#f3efe3"/>
<path d="M1159.3 453.3 L1156.6 447.7 L1160.6 443.6 L1167.6 445.5 L1172.1 452.8 Z" fill="#f3efe3"/>
<path d="M1051.2 517.6 L1043.0 515.5 L1033.2 512.5 L1043.3 509.7 L1050.1 509.4 L1054.0 512.8 Z" fill="#f3efe3"/>
<path d="M989.0 443.3 L983.0 445.8 L981.7 434.4 L983.3 424.7 L988.9 426.7 Z" fill="#f3efe3"/>
<path d="M879.4 363.6 L882.2 366.8 L878.5 368.5 L874.2 368.3 L874.7 363.8 Z" fill="#f3efe3"/>
<path d="M890.6 414.4 L884.9 418.8 L879.2 416.8 L878.4 410.8 L881.5 404.5 L889.4 405.5 Z" fill="#f3efe3"/>
<path d="M1020.0 332.0 L1019.8 336.7 L1019.1 340.9 L1015.0 340.6 L1009.9 339.2 L1012.3 334.2 L1015.0 329.4 Z" fill="#f3efe3"/>
<path d="M1066.5 395.1 L1063.9 392.6 L1063.0 388.8 L1063.1 382.9 L1067.1 381.7 L1068.3 387.4 L1069.3 392.1 Z" fill="#f3efe3"/>
<path d="M932.8 496.9 L937.8 499.1 L936.9 502.0 L934.3 505.1 L927.2 504.5 L924.8 501.3 L927.7 498.8 Z" fill="#f3efe3"/>
<path d="M1031.1 294.5 L1039.6 295.1 L1045.7 296.3 L1044.4 301.8 L1038.7 305.9 L1033.1 301.4 Z" fill="#f3efe3"/>
<path d="M1085.5 561.8 L1079.5 562.9 L1078.0 558.1 L1081.1 553.0 L1087.4 556.5 Z" fill="#f3efe3"/>
<path d="M1035.7 501.8 L1031.4 501.7 L1032.4 499.4 L1033.1 498.0 L1035.7 498.0 L1037.9 498.7 L1037.5 500.2 Z" fill="#f3efe3"/>
<path d="M1168.9 529.0 L1166.1 530.2 L1164.1 529.2 L1163.2 528.0 L1163.8 526.7 L1165.4 525.8 L1168.2 526.3 Z" fill="#f3efe3"/>
<path d="M1077.5 556.6 L1079.0 554.6 L1079.3 560.6 L1079.1 565.7 L1077.5 567.0 L1076.7 561.5 Z" fill="#f3efe3"/>
<path d="M972.9 283.9 L974.2 296.1 L970.2 301.1 L968.8 291.0 L969.6 281.5 Z" fill="#f3efe3"/>
<path d="M1052.2 336.9 L1052.4 334.9 L1058.6 334.1 L1060.1 336.1 L1058.2 338.2 Z" fill="#f3efe3"/>
<path d="M897.8 332.1 L893.1 329.1 L892.6 317.1 L896.9 317.4 L899.0 322.4 Z" fill="#f3efe3"/>
<path d="M880.4 476.8 L885.7 475.4 L892.3 475.8 L892.5 478.1 L888.2 479.0 L884.5 478.3 Z" fill="#f3efe3"/>
<path d="M1126.7 493.4 L1120.8 491.9 L1115.5 492.7 L1113.4 486.0 L1118.1 481.5 L1122.9 483.5 L1126.4 486.7 Z" fill="#f3efe3"/>
<path d="M1048.0 481.1 L1048.5 485.7 L1045.1 485.4 L1042.8 483.8 L1042.8 479.7 L1045.8 479.2 Z" fill="#f3efe3"/>
<path d="M968.8 501.8 L966.2 504.0 L965.1 495.6 L965.8 485.5 L969.1 484.8 L970.3 494.7 Z" fill="#f3efe3"/>
<path d="M939.9 409.6 L939.6 405.5 L942.9 404.6 L946.2 405.3 L946.4 409.5 L943.1 410.8 Z" fill="#f3efe3"/>
<path d="M938.6 333.2 L938.3 330.7 L943.6 328.0 L950.1 330.4 L953.8 332.6 L950.3 335.2 L942.9 334.9 Z" fill="#f3efe3"/>
<path d="M1083.1 416.9 L1078.1 412.6 L1087.2 410.5 L1093.9 409.9 L1099.9 412.2 L1100.4 416.6 L1091.6 418.0 Z" fill="#f3efe3"/>
<path d="M917.3 278.9 L920.0 283.7 L922.2 291.5 L920.4 301.3 L917.4 300.0 L915.7 294.9 L915.5 287.2 Z" fill="#f3efe3"/>
<path d="M1147.2 419.5 L1154.1 424.2 L1151.9 430.4 L1143.4 429.9 L1137.9 423.7 Z" fill="#f3efe3"/>
<path d="M1062.9 308.8 L1068.1 314.3 L1064.5 321.1 L1059.7 321.7 L1057.7 313.4 Z" fill="#f3efe3"/>
<path d="M844.2 364.3 L842.1 359.7 L844.2 356.8 L848.9 355.8 L854.5 358.3 L851.0 362.4 Z" fill="#f3efe3"/>
<path d="M1146.1 509.8 L1142.9 509.9 L1139.1 507.7 L1141.9 504.6 L1144.8 504.3 L1148.6 504.2 L1147.9 507.5 Z" fill="#f3efe3"/>
<path d="M1036.4 429.1 L1041.4 427.7 L1043.9 432.3 L1040.3 434.7 L1035.2 434.6 Z" fill="#f3efe3"/>
<path d="M974.6 344.3 L973.5 340.1 L977.0 339.3 L978.9 342.1 L980.1 347.1 L976.0 347.3 Z" fill="#f3efe3"/>
<path d="M1000.7 430.1 L1002.9 434.0 L998.7 435.2 L995.7 433.0 L997.8 430.2 Z" fill="#f3efe3"/>
<path d="M1171.3 542.3 L1164.1 541.3 L1164.5 529.4 L1170.6 527.7 L1172.9 534.2 Z" fill="#f3efe3"/>
<path d="M1054.1 417.6 L1055.9 420.1 L1055.6 423.7 L1054.3 425.9 L1052.8 424.7 L1052.2 422.5 L1052.1 419.1 Z" fill="#f3efe3"/>
<path d="M984.8 460.0 L984.2 453.1 L987.0 452.5 L990.2 452.1 L989.3 459.4 L987.1 462.0 Z" fill="#f3efe3"/>
<path d="M1182.6 426.2 L1180.5 429.0 L1175.6 429.4 L1174.5 427.3 L1176.9 425.7 Z" fill="#f3efe3"/>
<path d="M1239.9 481.9 L1241.3 489.6 L1237.6 492.3 L1235.0 490.9 L1234.4 485.9 L1234.1 479.3 L1237.4 477.2 Z" fill="#fbfaf7"/>
<path d="M1122.3 482.7 L1117.9 486.7 L1113.1 482.6 L1114.7 477.3 L1121.8 477.6 Z" fill="#fbfaf7"/>
<path d="M1095.1 550.3 L1090.8 547.9 L1089.7 545.3 L1094.9 544.6 L1099.7 545.3 L1100.2 548.1 Z" fill="#fbfaf7"/>
<path d="M1140.5 536.3 L1137.0 541.6 L1131.7 539.7 L1129.9 533.8 L1135.7 533.2 Z" fill="#fbfaf7"/>
<path d="M1143.1 565.7 L1145.7 568.7 L1137.1 569.8 L1131.8 567.8 L1135.8 566.0 Z" fill="#fbfaf7"/>
<path d="M1158.4 553.8 L1163.6 552.6 L1169.3 551.4 L1175.4 553.1 L1175.9 556.1 L1167.3 556.5 L1162.6 555.4 Z" fill="#fbfaf7"/>
<path d="M1207.7 476.0 L1203.2 472.2 L1205.1 465.5 L1210.2 465.1 L1213.8 467.3 L1213.9 471.8 L1212.5 477.2 Z" fill="#fbfaf7"/>
<path d="M1153.5 469.8 L1150.4 472.4 L1145.5 472.2 L1140.1 469.6 L1144.5 466.3 L1148.7 463.7 L1153.7 466.1 Z" fill="#fbfaf7"/>
<path d="M1136.0 586.7 L1131.9 587.7 L1128.5 588.6 L1128.8 585.5 L1129.9 582.8 L1134.0 583.1 Z" fill="#fbfaf7"/>
<path d="M1091.0 557.4 L1093.3 558.4 L1092.3 559.9 L1087.1 560.6 L1085.7 558.6 L1085.9 556.5 Z" fill="#fbfaf7"/>
<path d="M1095.0 582.5 L1097.5 582.8 L1098.6 584.4 L1098.9 586.5 L1096.4 586.6 L1094.8 586.0 L1093.2 584.3 Z" fill="#fbfaf7"/>
<path d="M1247.6 600.1 L1245.1 598.6 L1246.5 597.0 L1252.1 596.0 L1256.2 597.5 L1256.1 599.0 L1254.0 601.2 Z" fill="#fbfaf7"/>
<path d="M1098.9 511.5 L1092.5 512.5 L1089.2 510.4 L1085.6 508.4 L1091.0 507.3 L1095.5 507.5 L1100.6 508.8 Z" fill="#fbfaf7"/>
<path d="M1226.1 554.1 L1224.6 546.7 L1227.4 543.5 L1230.3 545.7 L1229.4 554.3 Z" fill="#fbfaf7"/>
<path d="M1230.9 523.6 L1233.2 521.2 L1235.2 518.7 L1236.9 525.5 L1235.9 533.9 L1233.5 534.3 L1230.7 533.7 Z" fill="#fbfaf7"/>
<path d="M1250.7 573.5 L1246.7 568.9 L1253.5 566.9 L1258.6 567.5 L1261.5 571.2 L1257.2 574.9 Z" fill="#fbfaf7"/>
<path d="M1259.5 491.6 L1261.0 493.4 L1261.8 495.5 L1257.6 495.2 L1254.8 494.2 L1256.1 492.6 Z" fill="#fbfaf7"/>
<path d="M1104.7 594.9 L1103.5 592.2 L1104.3 589.8 L1106.2 587.6 L1108.9 589.1 L1110.0 592.3 L1107.4 593.8 Z" fill="#fbfaf7"/>
<path d="M1083.7 496.0 L1083.8 491.2 L1087.7 489.2 L1090.5 492.1 L1089.0 495.7 Z" fill="#fbfaf7"/>
<path d="M1230.0 524.8 L1226.2 525.6 L1223.2 524.4 L1221.4 521.8 L1226.8 521.6 L1233.9 521.8 Z" fill="#fbfaf7"/>
<path d="M1117.8 521.5 L1120.9 519.3 L1126.2 518.3 L1127.7 520.8 L1124.3 523.2 Z" fill="#fbfaf7"/>
<path d="M1148.9 478.8 L1146.4 477.8 L1144.8 476.7 L1145.2 473.8 L1147.3 472.2 L1149.3 474.7 Z" fill="#fbfaf7"/>
<path d="M1253.7 493.3 L1253.1 490.7 L1255.1 489.3 L1257.8 490.2 L1257.5 492.5 Z" fill="#fbfaf7"/>
<path d="M1228.3 508.3 L1224.6 509.7 L1221.4 507.7 L1222.3 500.2 L1226.0 503.5 Z" fill="#fbfaf7"/>
<path d="M1132.2 503.0 L1134.7 504.7 L1135.7 507.2 L1133.7 510.4 L1128.9 509.8 L1128.4 506.5 L1128.1 503.3 Z" fill="#fbfaf7"/>
</g>
<path d="M975.8 607.9 Q972.5 604.6 979.8 602.0 Q987.0 599.4 994.9 600.7 Q1002.8 602.0 1006.1 604.0 Q1009.4 606.0 1003.5 608.0 Q997.5 609.9 988.3 610.5 Q979.1 611.2 975.8 607.9 Z" fill="#b5e8d2"/>
<path d="M1156.8 719.4 Q1157.6 715.6 1159.2 715.4 Q1160.8 715.1 1161.7 722.2 Q1162.6 729.3 1160.8 730.3 Q1159.1 731.3 1157.6 727.2 Q1156.1 723.1 1156.8 719.4 Z" fill="#b5e8d2"/>
<path d="M1259.2 727.5 Q1255.4 720.6 1257.9 720.0 Q1260.4 719.4 1264.8 724.3 Q1269.1 729.3 1268.5 732.4 Q1267.9 735.5 1265.4 734.9 Q1262.9 734.3 1259.2 727.5 Z" fill="#b5e8d2"/>
<path d="M1264.8 741.0 Q1262.9 739.3 1267.2 738.8 Q1271.6 738.3 1271.8 740.0 Q1272.1 741.8 1269.3 742.3 Q1266.6 742.8 1264.8 741.0 Z" fill="#b5e8d2"/>
<path d="M1178.2 756.0 Q1179.5 753.0 1182.0 750.9 Q1184.5 748.7 1192.0 751.5 Q1199.4 754.2 1204.4 756.5 Q1209.4 758.9 1193.2 758.9 Q1177.0 758.9 1178.2 756.0 Z" fill="#b5e8d2"/>
<path d="M1253.0 757.2 Q1254.2 755.5 1257.9 754.0 Q1261.6 752.5 1265.3 754.0 Q1269.1 755.5 1270.3 757.2 Q1271.6 758.9 1261.7 758.9 Q1251.7 758.9 1253.0 757.2 Z" fill="#b5e8d2"/>
<path d="M962.5 150.2 Q962.6 148.2 965.2 146.6 Q967.8 145.1 969.8 149.4 Q971.7 153.8 969.4 154.2 Q967 154.6 964.6 153.4 Q962.3 152.2 962.5 150.2 Z" fill="#b5e8d2"/>
<path d="M1334.0 351.7 Q1333.0 348.0 1334.5 347.2 Q1335.9 346.4 1336.7 350.9 Q1337.5 355.4 1336.5 360.6 Q1335.4 365.9 1334.3 364.6 Q1333.3 363.3 1334.1 359.4 Q1334.9 355.4 1334.0 351.7 Z" fill="#b5e8d2"/>
<path d="M1200.2 74.4 Q1165.9 74.4 1169.2 75.7 Q1172.5 77.0 1177.1 80.3 Q1181.7 83.6 1188.3 85.5 Q1194.9 87.5 1204.1 88.2 Q1213.3 88.9 1221.2 90.8 Q1229.1 92.8 1234.4 94.8 Q1239.7 96.8 1243.0 94.8 Q1246.3 92.8 1240.3 90.2 Q1234.4 87.5 1239.7 88.2 Q1244.9 88.9 1250.8 88.2 Q1256.8 87.5 1252.2 84.9 Q1247.6 82.3 1241.0 79.7 Q1234.4 77.0 1234.4 75.7 Q1234.4 74.4 1200.2 74.4 Z" fill="#b5e8d2"/>
<path d="M1557.0 261.1 Q1551.4 256.5 1557.8 258.7 Q1564.3 260.9 1575.4 266.4 Q1586.5 272.0 1595.7 276.6 Q1604.9 281.2 1603.1 282.3 Q1601.2 283.4 1591.1 279.5 Q1580.9 275.7 1571.7 270.7 Q1562.5 265.7 1557.0 261.1 Z" fill="#b5e8d2"/>
<path d="M1461.5 93.2 Q1457.4 90.2 1463.0 91.3 Q1468.5 92.4 1473.7 95.0 Q1478.8 97.6 1477.7 98.5 Q1476.6 99.4 1471.0 97.8 Q1465.5 96.1 1461.5 93.2 Z" fill="#b5e8d2"/>
<path d="M1435.3 110.5 Q1435.3 109.8 1441.2 112.2 Q1447.1 114.6 1446.8 115.3 Q1446.4 116.0 1440.8 113.6 Q1435.3 111.2 1435.3 110.5 Z" fill="#b5e8d2"/>
<path d="M1426.1 79.8 Q1416.9 76.6 1428.0 76.9 Q1439.0 77.3 1446.3 79.7 Q1453.7 82.1 1444.5 82.5 Q1435.3 82.9 1426.1 79.8 Z" fill="#b5e8d2"/>
<path d="M1594.9 147.3 Q1594.6 145.5 1596.0 146.2 Q1597.5 147.0 1597.8 148.8 Q1598.2 150.7 1596.8 149.9 Q1595.3 149.2 1594.9 147.3 Z" fill="#b5e8d2"/>
<path d="M1583.2 164.7 Q1581.3 161.8 1583.9 162.9 Q1586.5 164.0 1588.0 166.6 Q1589.4 169.1 1587.2 168.3 Q1585.0 167.6 1583.2 164.7 Z" fill="#b5e8d2"/>
<path d="M1600.1 185.4 Q1598.2 182.4 1601.9 183.5 Q1605.6 184.6 1610.0 188.3 Q1614.5 192.0 1612.7 192.8 Q1610.8 193.5 1606.3 190.9 Q1601.9 188.3 1600.1 185.4 Z" fill="#b5e8d2"/>
<path d="M1596.4 155.1 Q1596.0 154.0 1598.2 154.2 Q1600.5 154.4 1600.5 155.5 Q1600.5 156.6 1598.7 156.4 Q1596.8 156.2 1596.4 155.1 Z" fill="#b5e8d2"/>
<path d="M1225.0 88.5 Q1220 84 1226.0 86.0 Q1232 88 1236.0 91.0 Q1240 94 1235.0 93.5 Q1230 93 1225.0 88.5 Z" fill="#b5e8d2"/>
<path d="M1243.0 92.0 Q1240 88 1246.0 90.5 Q1252 93 1254.0 95.5 Q1256 98 1251.0 97.0 Q1246 96 1243.0 92.0 Z" fill="#b5e8d2"/>
<path d="M1269.0 102.5 Q1270 101 1276.0 102.5 Q1282 104 1281.0 105.5 Q1280 107 1274.0 105.5 Q1268 104 1269.0 102.5 Z" fill="#b5e8d2"/>
<path d="M838.0 116.3 Q838 112 850.3 111.5 Q862.6 111 867.3 110.7 Q872 110.3 876.8 110.7 Q881.6 111 883.2 112.6 Q884.8 114.2 884.4 116.6 Q884 119 881.2 119.8 Q878.5 120.6 873.8 120.6 Q869 120.6 864.2 121.0 Q859.5 121.4 848.8 121.0 Q838 120.6 838.0 116.3 Z" fill="#70d3e8"/>
<path d="M976.8 416.1 Q975.9 411.5 978.8 411.1 Q981.7 410.7 985.7 413.0 Q989.6 415.4 991.6 420.0 Q993.6 424.6 995.5 431.2 Q997.5 437.8 994.9 437.4 Q992.3 437.0 989.6 434.1 Q987.0 431.2 984.4 433.6 Q981.7 436.0 979.4 433.6 Q977.0 431.2 977.4 425.9 Q977.8 420.7 976.8 416.1 Z" fill="#70d3e8"/>
<path d="M983.0 444.1 Q981.7 441.8 988.0 440.8 Q994.4 439.7 994.0 441.4 Q993.6 443.1 989.0 444.8 Q984.4 446.5 983.0 444.1 Z" fill="#70d3e8"/>
<path d="M986.4 467.0 Q985.7 465.0 989.0 466.4 Q992.3 467.7 996.9 473.6 Q1001.5 479.5 1003.5 484.8 Q1005.4 490.1 1002.8 496.6 Q1000.2 503.2 998.2 497.9 Q996.2 492.7 994.9 486.1 Q993.6 479.5 990.3 474.2 Q987.0 469.0 986.4 467.0 Z" fill="#70d3e8"/>
<path d="M945.5 490.7 Q942.2 484.8 946.2 486.1 Q950.1 487.4 955.4 492.0 Q960.6 496.6 962.2 502.6 Q963.8 508.5 961.5 510.4 Q959.3 512.4 957.3 507.8 Q955.4 503.2 952.1 499.9 Q948.8 496.6 945.5 490.7 Z" fill="#70d3e8"/>
<path d="M931.0 495.6 Q929.0 492.7 934.3 491.4 Q939.6 490.1 940.2 492.1 Q940.9 494.0 937.0 496.2 Q933.0 498.5 931.0 495.6 Z" fill="#70d3e8"/>
<path d="M970.1 494.3 Q968.5 490.1 971.8 490.8 Q975.1 491.4 975.5 495.4 Q975.9 499.3 973.8 498.9 Q971.7 498.5 970.1 494.3 Z" fill="#70d3e8"/>
<path d="M1040.3 480.9 Q1038.4 476.9 1042.3 472.3 Q1046.3 467.7 1048.0 468.6 Q1049.7 469.5 1048.7 475.8 Q1047.6 482.1 1044.9 483.5 Q1042.3 484.8 1040.3 480.9 Z" fill="#70d3e8"/>
<path d="M983.7 444.0 Q981.7 441.3 987.0 440.6 Q992.3 440.0 993.3 442.0 Q994.4 444.0 990.0 445.3 Q985.7 446.6 983.7 444.0 Z" fill="#70d3e8"/>
<path d="M1036.4 442.0 Q1034.4 440.0 1037.7 440.0 Q1041.0 440.0 1042.3 443.3 Q1043.6 446.6 1041.0 445.3 Q1038.4 444.0 1036.4 442.0 Z" fill="#70d3e8"/>
<path d="M929.0 226.9 Q927.7 224.5 931.2 222.6 Q934.8 220.6 936.1 222.3 Q937.5 224.0 933.9 226.7 Q930.3 229.3 929.0 226.9 Z" fill="#70d3e8"/>
<path d="M944.1 234.4 Q943.5 231.1 945.8 230.8 Q948.0 230.6 948.5 233.5 Q949.1 236.4 947.0 237.1 Q944.8 237.7 944.1 234.4 Z" fill="#70d3e8"/>
<path d="M1036.4 441.8 Q1034.4 439.1 1039.0 440.5 Q1043.6 441.8 1044.5 444.1 Q1045.5 446.5 1042.0 445.4 Q1038.4 444.4 1036.4 441.8 Z" fill="#70d3e8"/>
<path d="M1076.3 378.3 Q1073.9 375.9 1076.8 375.4 Q1079.7 374.9 1079.2 377.8 Q1078.7 380.7 1076.3 378.3 Z" fill="#70d3e8"/>
<path d="M1040.3 353.1 Q1038.4 350.9 1042.3 350.5 Q1046.3 350.1 1044.3 352.8 Q1042.3 355.4 1040.3 353.1 Z" fill="#70d3e8"/>
<path d="M850 120 Q858 135 867.5 146.5 Q877 158 885.0 164.0 Q893 170 895.5 180.0 Q898 190 900.0 202.5 Q902 215 907.0 227.5 Q912 240 914.5 251.0 Q917 262 911.0 273.5 Q905 285 901.5 295.0 Q898 305 903.0 315.0 Q908 325 905.0 335.0 Q902 345 897.5 357.5 Q893 370 895.0 382.5 Q897 395 904.5 407.5 Q912 420 918.5 432.5 Q925 445 930.0 457.5 Q935 470 947.5 485.0 Q960 500 972.5 510.0 Q985 520 992.5 532.5 Q1000 545 1004.0 555.0 Q1008 565 1013.5 572.5 L1019 580" fill="none" stroke="#98a9d8" stroke-width="1.1" opacity="0.8"/>
<path d="M850 175 Q862 168 869.5 163.0 L877 158" fill="none" stroke="#98a9d8" stroke-width="1.1" opacity="0.8"/>
<path d="M917 262 Q945 268 960.0 270.0 Q975 272 987.5 270.0 Q1000 268 1015.0 267.0 Q1030 266 1045.0 267.0 Q1060 268 1080.0 269.0 Q1100 270 1120.0 270.0 Q1140 270 1155.0 266.0 Q1170 262 1180.0 256.0 Q1190 250 1195.0 245.0 L1200 240" fill="none" stroke="#98a9d8" stroke-width="1.1" opacity="0.8"/>
<path d="M1030 266 Q1022 280 1030.0 295.0 Q1038 310 1036.0 325.0 Q1034 340 1032.0 355.0 Q1030 370 1033.0 380.0 Q1036 390 1027.0 395.0 Q1018 400 1016.5 415.0 Q1015 430 1010.0 442.5 Q1005 455 1008.5 467.5 Q1012 480 1011.0 495.0 Q1010 510 1006.0 520.0 L1002 530" fill="none" stroke="#98a9d8" stroke-width="1.1" opacity="0.8"/>
<path d="M1045 266 Q1042 240 1046.0 232.5 Q1050 225 1054.0 218.5 L1058 212" fill="none" stroke="#98a9d8" stroke-width="1.1" opacity="0.8"/>
<path d="M1190 250 Q1195 275 1202.5 287.5 Q1210 300 1217.5 315.0 Q1225 330 1230.0 345.0 Q1235 360 1242.5 372.5 Q1250 385 1260.0 392.5 Q1270 400 1285.0 405.0 Q1300 410 1315.0 407.5 L1330 405" fill="none" stroke="#98a9d8" stroke-width="1.1" opacity="0.8"/>
<path d="M1100 270 Q1130 285 1145.0 292.5 Q1160 300 1180.0 302.5 Q1200 305 1215.0 305.0 Q1230 305 1246.0 311.5 L1262 318" fill="none" stroke="#98a9d8" stroke-width="1.1" opacity="0.8"/>
<path d="M1210 300 Q1215 330 1217.5 345.0 Q1220 360 1230.0 372.5 Q1240 385 1245.0 397.5 Q1250 410 1256.0 425.0 Q1262 440 1266.0 455.0 Q1270 470 1277.5 485.0 Q1285 500 1292.5 515.0 Q1300 530 1307.5 537.5 L1315 545" fill="none" stroke="#98a9d8" stroke-width="1.1" opacity="0.8"/>
<path d="M1200 380 Q1235 383 1252.5 384.0 Q1270 385 1290.0 390.0 Q1310 395 1325.0 398.5 L1340 402" fill="none" stroke="#98a9d8" stroke-width="1.1" opacity="0.8"/>
<path d="M1262 318 Q1280 340 1290.0 350.0 Q1300 360 1310.0 372.5 Q1320 385 1329.0 393.5 L1338 402" fill="none" stroke="#98a9d8" stroke-width="1.1" opacity="0.8"/>
<path d="M1180 330 Q1200 345 1212.5 352.5 L1225 360" fill="none" stroke="#98a9d8" stroke-width="1.1" opacity="0.8"/>
<path d="M1140 495 Q1180 495 1197.5 496.0 Q1215 497 1232.5 504.5 Q1250 512 1261.0 516.0 Q1272 520 1286.0 527.5 Q1300 535 1308.0 540.0 L1316 545" fill="none" stroke="#98a9d8" stroke-width="1.1" opacity="0.8"/>
<path d="M1185 458 Q1200 480 1207.5 488.5 Q1215 497 1227.5 506.0 Q1240 515 1245.0 527.5 Q1250 540 1245.0 555.0 Q1240 570 1232.5 580.0 Q1225 590 1220.0 605.0 Q1215 620 1205.0 632.5 Q1195 645 1187.5 651.5 L1180 658" fill="none" stroke="#98a9d8" stroke-width="1.1" opacity="0.8"/>
<path d="M1250 540 Q1280 540 1298.0 542.5 L1316 545" fill="none" stroke="#98a9d8" stroke-width="1.1" opacity="0.8"/>
<path d="M1316 545 Q1310 570 1302.5 580.0 Q1295 590 1282.5 595.0 Q1270 600 1260.0 606.0 Q1250 612 1237.5 626.0 Q1225 640 1212.5 647.5 Q1200 655 1190.0 656.5 L1180 658" fill="none" stroke="#98a9d8" stroke-width="1.1" opacity="0.8"/>
<path d="M1316 545 Q1335 520 1340.0 505.0 Q1345 490 1348.5 475.0 Q1352 460 1351.0 445.0 Q1350 430 1344.0 416.0 L1338 402" fill="none" stroke="#98a9d8" stroke-width="1.1" opacity="0.8"/>
<path d="M1300 530 Q1310 500 1317.5 485.0 Q1325 470 1327.5 455.0 Q1330 440 1334.0 421.0 L1338 402" fill="none" stroke="#98a9d8" stroke-width="1.1" opacity="0.8"/>
<path d="M1019 580 Q1035 595 1047.5 605.0 Q1060 615 1075.0 625.0 Q1090 635 1105.0 641.5 Q1120 648 1135.0 651.5 Q1150 655 1165.0 656.5 L1180 658" fill="none" stroke="#98a9d8" stroke-width="1.1" opacity="0.8"/>
<path d="M1019 580 Q1022 560 1031.0 552.5 Q1040 545 1057.5 537.5 Q1075 530 1092.5 525.0 Q1110 520 1125.0 515.0 Q1140 510 1140.0 502.5 L1140 495" fill="none" stroke="#98a9d8" stroke-width="1.1" opacity="0.8"/>
<path d="M1019 580 Q1040 590 1060.0 590.0 Q1080 590 1095.0 595.0 Q1110 600 1125.0 605.0 Q1140 610 1150.0 622.5 Q1160 635 1170.0 646.5 L1180 658" fill="none" stroke="#98a9d8" stroke-width="1.1" opacity="0.8"/>
<path d="M1060 640 Q1075 655 1087.5 662.5 Q1100 670 1115.0 669.0 Q1130 668 1145.0 666.5 Q1160 665 1170.0 661.5 L1180 658" fill="none" stroke="#98a9d8" stroke-width="1.1" opacity="0.8"/>
<path d="M1180 658 Q1210 660 1225.0 657.5 Q1240 655 1255.0 651.5 Q1270 648 1282.5 644.0 L1295 640" fill="none" stroke="#98a9d8" stroke-width="1.1" opacity="0.8"/>
<path d="M1140 610 Q1170 605 1185.0 607.5 Q1200 610 1212.5 600.0 L1225 590" fill="none" stroke="#98a9d8" stroke-width="1.1" opacity="0.8"/>
<path d="M850 495 Q880 508 895.0 514.0 Q910 520 925.0 525.0 Q940 530 952.5 532.5 Q965 535 977.5 531.5 Q990 528 996.0 529.0 L1002 530" fill="none" stroke="#98a9d8" stroke-width="1.1" opacity="0.8"/>
<path d="M1002 530 Q1010 555 1014.5 567.5 L1019 580" fill="none" stroke="#98a9d8" stroke-width="1.1" opacity="0.8"/>
<path d="M996.5 193 L998.3 371.4" stroke="#777" stroke-width="0.9" stroke-dasharray="2.2 2.2" fill="none"/>
<path d="M840 371.4 L1067.3 371.4 L1070 436" stroke="#777" stroke-width="0.9" stroke-dasharray="2.2 2.2" fill="none"/>
<path d="M1070 436 L1225 436 L1238 433 L1250 430 L1258 426 L1266 427 L1272 431 L1282 428 L1292 431 L1300 430 L1305 437 L1310 436 L1318 430 L1330 429 L1340 434 L1352 440" stroke="#777" stroke-width="0.9" stroke-dasharray="2.2 2.2" fill="none"/>
<path d="M1070 436 L1076 520 L1078 600 L1080 668" stroke="#777" stroke-width="0.9" stroke-dasharray="2.2 2.2" fill="none"/>
<path d="M1077.5 557.3 Q1092 558 1098.5 560.0 Q1105 562 1110.0 567.0 Q1115 572 1123.5 576.0 Q1132 580 1139.5 587.5 Q1147 595 1156.0 601.0 Q1165 607 1168.5 609.5 Q1172 612 1181.0 610.5 Q1190 609 1200.0 610.0 Q1210 611 1222.5 610.0 Q1235 609 1241.0 610.0 Q1247 611 1251.0 618.0 Q1255 625 1261.0 631.0 Q1267 637 1276.0 641.0 Q1285 645 1292.5 648.5 L1300 652" stroke="#777" stroke-width="0.9" stroke-dasharray="2.2 2.2" fill="none"/>
<path d="M1264 588 Q1268 582 1274 584 Q1272 592 1268 600" stroke="#777" stroke-width="0.9" stroke-dasharray="2.2 2.2" fill="none"/>
</svg><!--/MAPSVG-->
<!--MAPOVER--><svg width="1376" height="680" viewBox="240 77 1376 680" style="position:absolute;left:0;top:0;font-family:'Liberation Sans',sans-serif">
<circle cx="1029" cy="267" r="1.6" fill="#fff" stroke="#333" stroke-width="0.9"/>
<circle cx="1149.6" cy="191.6" r="1.5" fill="#fff" stroke="#333" stroke-width="0.8"/>
<circle cx="1158" cy="198.7" r="2.3" fill="#fff" stroke="#333" stroke-width="1.1"/>
<circle cx="1183" cy="240.8" r="2.3" fill="#fff" stroke="#333" stroke-width="1.1"/>
<circle cx="1238.2" cy="275" r="2.3" fill="#fff" stroke="#333" stroke-width="1.1"/>
<circle cx="909.3" cy="324.5" r="1.5" fill="#fff" stroke="#333" stroke-width="0.9"/>
<circle cx="1273" cy="591.5" r="2.4" fill="#fff" stroke="#333" stroke-width="1"/>
<circle cx="1273" cy="591.5" r="1.0" fill="#333"/>
<circle cx="1548.8" cy="97.6" r="1.4" fill="#fff" stroke="#333" stroke-width="0.8"/>
<circle cx="1020" cy="580.5" r="2.3" fill="#fff" stroke="#333" stroke-width="1.1"/>
<circle cx="1612.8" cy="297" r="2.3" fill="#fff" stroke="#333" stroke-width="1"/>
<circle cx="1612.8" cy="297" r="1.0" fill="#333"/>
<circle cx="1174.5" cy="77.5" r="2.3" fill="#fff" stroke="#333" stroke-width="1"/>
<circle cx="1174.5" cy="77.5" r="1.0" fill="#333"/>
<circle cx="850.5" cy="124.5" r="2.3" fill="#fff" stroke="#333" stroke-width="1"/>
<circle cx="850.5" cy="124.5" r="1.0" fill="#333"/>
<circle cx="1348.5" cy="413.2" r="2" fill="#fff" stroke="#333" stroke-width="0.9"/>
<circle cx="1316.5" cy="551" r="2" fill="#fff" stroke="#333" stroke-width="0.9"/>
<text x="315.3" y="92" font-size="14" font-weight="bold" fill="#1f1f1f" textLength="63.5" lengthAdjust="spacingAndGlyphs" stroke="#fff" stroke-width="2.3" stroke-linejoin="round" paint-order="stroke" >Christmas</text>
<text x="828" y="120.3" font-size="11.5" font-weight="normal" fill="#3a3a3a" textLength="34" lengthAdjust="spacingAndGlyphs" stroke="#fff" stroke-width="2.3" stroke-linejoin="round" paint-order="stroke" >Darwin</text>
<text x="870.5" y="245.6" font-size="10" font-weight="normal" fill="#555" textLength="64.3" lengthAdjust="spacing" stroke="#fff" stroke-width="2.3" stroke-linejoin="round" paint-order="stroke" >NORTHERN</text>
<text x="870.5" y="256.2" font-size="10" font-weight="normal" fill="#555" textLength="65.9" lengthAdjust="spacing" stroke="#fff" stroke-width="2.3" stroke-linejoin="round" paint-order="stroke" >TERRITORY</text>
<text x="997.5" y="263.6" font-size="11" font-weight="normal" fill="#3a3a3a" textLength="63.2" lengthAdjust="spacingAndGlyphs" stroke="#fff" stroke-width="2.3" stroke-linejoin="round" paint-order="stroke" >Mount Isa City</text>
<text x="1122.4" y="187.6" font-size="11" font-weight="normal" fill="#3a3a3a" textLength="57.2" lengthAdjust="spacingAndGlyphs" stroke="#fff" stroke-width="2.3" stroke-linejoin="round" paint-order="stroke" >Port Douglas</text>
<text x="1143.5" y="212.3" font-size="11" font-weight="normal" fill="#3a3a3a" textLength="28.2" lengthAdjust="spacingAndGlyphs" stroke="#fff" stroke-width="2.3" stroke-linejoin="round" paint-order="stroke" >Cairns</text>
<text x="1160.6" y="226.3" font-size="11" font-weight="normal" fill="#3a3a3a" textLength="46.4" lengthAdjust="spacingAndGlyphs" stroke="#fff" stroke-width="2.3" stroke-linejoin="round" paint-order="stroke" >Townsville</text>
<text x="1175" y="236.3" font-size="11" font-weight="normal" fill="#3a3a3a" textLength="17" lengthAdjust="spacingAndGlyphs" stroke="#fff" stroke-width="2.3" stroke-linejoin="round" paint-order="stroke" >City</text>
<text x="1220.5" y="269.8" font-size="11" font-weight="normal" fill="#3a3a3a" textLength="34.3" lengthAdjust="spacingAndGlyphs" stroke="#fff" stroke-width="2.3" stroke-linejoin="round" paint-order="stroke" >Mackay</text>
<text x="1093.5" y="313.5" font-size="10" font-weight="normal" fill="#555" textLength="80.0" lengthAdjust="spacing" stroke="#fff" stroke-width="2.3" stroke-linejoin="round" paint-order="stroke" >QUEENSLAND</text>
<text x="880.3" y="320.7" font-size="11" font-weight="normal" fill="#3a3a3a" textLength="57.4" lengthAdjust="spacingAndGlyphs" stroke="#fff" stroke-width="2.3" stroke-linejoin="round" paint-order="stroke" >Alice Springs</text>
<text x="879.5" y="359.6" font-size="20.5" font-weight="bold" fill="#1a1a1a" textLength="79.8" lengthAdjust="spacingAndGlyphs" stroke="#fff" stroke-width="2.3" stroke-linejoin="round" paint-order="stroke" >Australia</text>
<text x="830" y="352" font-size="10" font-weight="normal" fill="#3a3a3a" textLength="28" lengthAdjust="spacingAndGlyphs" stroke="#fff" stroke-width="2.3" stroke-linejoin="round" paint-order="stroke" >Yulara</text>
<text x="910.6" y="459.2" font-size="10" font-weight="normal" fill="#555" textLength="39.4" lengthAdjust="spacing" stroke="#fff" stroke-width="2.3" stroke-linejoin="round" paint-order="stroke" >SOUTH</text>
<text x="896.6" y="469.9" font-size="10" font-weight="normal" fill="#555" textLength="66.7" lengthAdjust="spacing" stroke="#fff" stroke-width="2.3" stroke-linejoin="round" paint-order="stroke" >AUSTRALIA</text>
<text x="1161.6" y="521" font-size="10" font-weight="normal" fill="#555" textLength="70.4" lengthAdjust="spacing" stroke="#fff" stroke-width="2.3" stroke-linejoin="round" paint-order="stroke" >NEW SOUTH</text>
<text x="1178" y="531.8" font-size="10" font-weight="normal" fill="#555" textLength="39" lengthAdjust="spacing" stroke="#fff" stroke-width="2.3" stroke-linejoin="round" paint-order="stroke" >WALES</text>
<text x="1127.7" y="643.2" font-size="10" font-weight="normal" fill="#555" textLength="55.5" lengthAdjust="spacing" stroke="#fff" stroke-width="2.3" stroke-linejoin="round" paint-order="stroke" >VICTORIA</text>
<text x="1145.4" y="679.6" font-size="15" font-weight="normal" fill="#2e2e2e" textLength="66.5" lengthAdjust="spacingAndGlyphs" stroke="#fff" stroke-width="2.3" stroke-linejoin="round" paint-order="stroke" >Melbourne</text>
<text x="993.6" y="577.2" font-size="14.5" font-weight="bold" fill="#333" textLength="54.0" lengthAdjust="spacingAndGlyphs" stroke="#fff" stroke-width="2.3" stroke-linejoin="round" paint-order="stroke" >Adelaide</text>
<text x="1311.9" y="397.8" font-size="14" font-weight="normal" fill="#2e2e2e" textLength="54.4" lengthAdjust="spacingAndGlyphs" stroke="#fff" stroke-width="2.3" stroke-linejoin="round" paint-order="stroke" >Brisbane</text>
<text x="1321.6" y="427.7" font-size="10.5" font-weight="normal" fill="#3a3a3a" textLength="53.2" lengthAdjust="spacingAndGlyphs" stroke="#fff" stroke-width="2.3" stroke-linejoin="round" paint-order="stroke" >Gold Coast</text>
<text x="1295.4" y="547.3" font-size="14" font-weight="normal" fill="#2e2e2e" textLength="44.6" lengthAdjust="spacingAndGlyphs" stroke="#fff" stroke-width="2.3" stroke-linejoin="round" paint-order="stroke" >Sydney</text>
<text x="1251" y="587.2" font-size="11" font-weight="normal" fill="#3a3a3a" textLength="44.4" lengthAdjust="spacingAndGlyphs" stroke="#fff" stroke-width="2.3" stroke-linejoin="round" paint-order="stroke" >Canberra</text>
<text x="1258.5" y="606.8" font-size="10" font-weight="normal" fill="#555" textLength="22.5" lengthAdjust="spacing" stroke="#fff" stroke-width="2.3" stroke-linejoin="round" paint-order="stroke" >ACT</text>
<text x="1352.6" y="249" font-size="11" font-weight="normal" fill="#2b8aa2" textLength="45.7" lengthAdjust="spacingAndGlyphs" >Coral Sea</text>
<text x="832" y="596.8" font-size="10.5" font-weight="normal" fill="#2b8aa2" textLength="27" lengthAdjust="spacingAndGlyphs" >Great</text>
<text x="821" y="610" font-size="10.5" font-weight="normal" fill="#2b8aa2" textLength="48" lengthAdjust="spacingAndGlyphs" >Australian</text>
<text x="836" y="621.2" font-size="10.5" font-weight="normal" fill="#2b8aa2" textLength="23" lengthAdjust="spacingAndGlyphs" >Bight</text>
<text x="1405.8" y="80.3" font-size="14" font-weight="bold" fill="#1f1f1f" textLength="55.2" lengthAdjust="spacingAndGlyphs" stroke="#fff" stroke-width="2.3" stroke-linejoin="round" paint-order="stroke" >Solomon</text>
<text x="1410" y="95" font-size="14" font-weight="bold" fill="#1f1f1f" textLength="45.6" lengthAdjust="spacingAndGlyphs" stroke="#fff" stroke-width="2.3" stroke-linejoin="round" paint-order="stroke" >Islands</text>
<text x="1540" y="94.8" font-size="10.5" font-weight="normal" fill="#3a3a3a" textLength="19.5" lengthAdjust="spacingAndGlyphs" stroke="#fff" stroke-width="2.3" stroke-linejoin="round" paint-order="stroke" >Lata</text>
<text x="1563.6" y="177" font-size="14" font-weight="bold" fill="#1f1f1f" textLength="51.2" lengthAdjust="spacingAndGlyphs" stroke="#fff" stroke-width="2.3" stroke-linejoin="round" paint-order="stroke" >Vanuatu</text>
<text x="1610.5" y="207.5" font-size="10.5" font-weight="normal" fill="#3a3a3a" textLength="19.5" lengthAdjust="spacingAndGlyphs" stroke="#fff" stroke-width="2.3" stroke-linejoin="round" paint-order="stroke" >Fiji</text>
<text x="1574" y="278" font-size="14" font-weight="bold" fill="#1f1f1f" textLength="28" lengthAdjust="spacingAndGlyphs" stroke="#fff" stroke-width="2.3" stroke-linejoin="round" paint-order="stroke" >New</text>
<text x="1557" y="292" font-size="14" font-weight="bold" fill="#1f1f1f" textLength="60.5" lengthAdjust="spacingAndGlyphs" stroke="#fff" stroke-width="2.3" stroke-linejoin="round" paint-order="stroke" >Caledonia</text>
<text x="1592" y="312.3" font-size="10.5" font-weight="normal" fill="#3a3a3a" textLength="40" lengthAdjust="spacingAndGlyphs" stroke="#fff" stroke-width="2.3" stroke-linejoin="round" paint-order="stroke" >Nouméa</text>
<text x="1548.6" y="759.5" font-size="10.5" font-weight="normal" fill="#2b8aa2" textLength="51.4" lengthAdjust="spacingAndGlyphs" >Tasman Sea</text>
<path transform="translate(876.8 154.6)" fill-rule="evenodd" fill="#c6c6c6" stroke="#9b9b9b" stroke-width="1" d="M-1.2 0 L-9.6 -14 C-11 -16.8 -11.6 -19 -11.6 -21 C-11.6 -27.6 -7.2 -31.5 0 -31.5 C7.2 -31.5 11.6 -27.6 11.6 -21 C11.6 -19 11 -16.8 9.6 -14 L1.2 0 Z M0 -26.8 A6.4 6.4 0 1 0 0.01 -14 A6.4 6.4 0 1 0 0 -26.8 Z"/>
<path transform="translate(977 382.8)" fill-rule="evenodd" fill="#c6c6c6" stroke="#9b9b9b" stroke-width="1" d="M-1.2 0 L-9.6 -14 C-11 -16.8 -11.6 -19 -11.6 -21 C-11.6 -27.6 -7.2 -31.5 0 -31.5 C7.2 -31.5 11.6 -27.6 11.6 -21 C11.6 -19 11 -16.8 9.6 -14 L1.2 0 Z M0 -26.8 A6.4 6.4 0 1 0 0.01 -14 A6.4 6.4 0 1 0 0 -26.8 Z"/>
<path transform="translate(1210.5 316)" fill-rule="evenodd" fill="#c6c6c6" stroke="#9b9b9b" stroke-width="1" d="M-1.2 0 L-9.6 -14 C-11 -16.8 -11.6 -19 -11.6 -21 C-11.6 -27.6 -7.2 -31.5 0 -31.5 C7.2 -31.5 11.6 -27.6 11.6 -21 C11.6 -19 11 -16.8 9.6 -14 L1.2 0 Z M0 -26.8 A6.4 6.4 0 1 0 0.01 -14 A6.4 6.4 0 1 0 0 -26.8 Z"/>
<path transform="translate(1020 577.5)" fill-rule="evenodd" fill="#c6c6c6" stroke="#9b9b9b" stroke-width="1" d="M-1.2 0 L-9.6 -14 C-11 -16.8 -11.6 -19 -11.6 -21 C-11.6 -27.6 -7.2 -31.5 0 -31.5 C7.2 -31.5 11.6 -27.6 11.6 -21 C11.6 -19 11 -16.8 9.6 -14 L1.2 0 Z M0 -26.8 A6.4 6.4 0 1 0 0.01 -14 A6.4 6.4 0 1 0 0 -26.8 Z"/>
<path transform="translate(1350 490)" fill-rule="evenodd" fill="#c6c6c6" stroke="#9b9b9b" stroke-width="1" d="M-1.2 0 L-9.6 -14 C-11 -16.8 -11.6 -19 -11.6 -21 C-11.6 -27.6 -7.2 -31.5 0 -31.5 C7.2 -31.5 11.6 -27.6 11.6 -21 C11.6 -19 11 -16.8 9.6 -14 L1.2 0 Z M0 -26.8 A6.4 6.4 0 1 0 0.01 -14 A6.4 6.4 0 1 0 0 -26.8 Z"/>
<path transform="translate(1276 518.5)" fill-rule="evenodd" fill="#c6c6c6" stroke="#9b9b9b" stroke-width="1" d="M-1.2 0 L-9.6 -14 C-11 -16.8 -11.6 -19 -11.6 -21 C-11.6 -27.6 -7.2 -31.5 0 -31.5 C7.2 -31.5 11.6 -27.6 11.6 -21 C11.6 -19 11 -16.8 9.6 -14 L1.2 0 Z M0 -26.8 A6.4 6.4 0 1 0 0.01 -14 A6.4 6.4 0 1 0 0 -26.8 Z"/>
<circle cx="1341" cy="402.5" r="23" fill="#1d5f80" opacity="0.28"/>
<circle cx="1341" cy="402.5" r="19" fill="#1d5f80" opacity="0.38"/>
<circle cx="1341" cy="402.5" r="15" fill="#1b5c7e" opacity="0.8"/>
<text x="1341" y="407.1" text-anchor="middle" font-size="10.5" font-weight="bold" fill="#fff">6</text>
<circle cx="1316.5" cy="545.4" r="23" fill="#1d5f80" opacity="0.28"/>
<circle cx="1316.5" cy="545.4" r="19" fill="#1d5f80" opacity="0.38"/>
<circle cx="1316.5" cy="545.4" r="15" fill="#1b5c7e" opacity="0.8"/>
<text x="1316.5" y="550.0" text-anchor="middle" font-size="10.5" font-weight="bold" fill="#fff">6</text>
<circle cx="1179" cy="658.4" r="23" fill="#1d5f80" opacity="0.28"/>
<circle cx="1179" cy="658.4" r="19" fill="#1d5f80" opacity="0.38"/>
<circle cx="1179" cy="658.4" r="15" fill="#1b5c7e" opacity="0.8"/>
<text x="1179" y="663.0" text-anchor="middle" font-size="10.5" font-weight="bold" fill="#fff">69</text>
</svg>
<div class="abs" style="left:1326px;top:471px;width:40px;height:122px;background:#fff;border-radius:2px;box-shadow:0 1px 4px -1px rgba(0,0,0,.3)"></div>
<div class="abs" style="left:1326px;top:471px;width:40px;height:40px;background:#fff;border-radius:20px;box-shadow:0 1px 4px -1px rgba(0,0,0,.4)"></div>
<svg class="abs" style="left:1334px;top:479px" width="24" height="24" viewBox="0 0 24 24"><path d="M8.5 5.5 L12 2 L15.5 5.5 M8.5 18.5 L12 22 L15.5 18.5 M5.5 8.5 L2 12 L5.5 15.5 M18.5 8.5 L22 12 L18.5 15.5" fill="none" stroke="#555" stroke-width="2" stroke-linejoin="miter"/></svg>
<div class="abs" style="left:1331px;top:511px;width:30px;height:1px;background:#e6e6e6"></div>
<svg class="abs" style="left:1336px;top:521px" width="20" height="22" viewBox="0 0 20 22"><path d="M10 5 A7 7 0 1 1 3.6 9" fill="none" stroke="#555" stroke-width="1.5" stroke-dasharray="3 2.2"/><path d="M10 5 A7 7 0 0 1 17 12 A7 7 0 0 1 10 19" fill="none" stroke="#555" stroke-width="1.5"/><path d="M10.5 1 L6.5 5 L10.5 9" fill="none" stroke="#555" stroke-width="1.5"/></svg>
<div class="abs" style="left:1326px;top:542px;width:40px;height:41px;background:#fff;border-radius:2px;box-shadow:0 1px 4px -1px rgba(0,0,0,.3)"></div>
<svg class="abs" style="left:1336px;top:547px" width="20" height="32" viewBox="0 0 20 32"><circle cx="10" cy="6" r="5.2" fill="#f7b315" stroke="#c98a10" stroke-width="0.7"/><path d="M2.5 14 Q3 11.5 6 11.5 L14 11.5 Q17 11.5 17.5 14 L18 21 Q17 22 16 21 L15.5 17 L15 30 L11 30 L10 22 L9 30 L5 30 L4.5 17 L4 21 Q3 22 2 21 Z" fill="#f7b315" stroke="#c98a10" stroke-width="0.7"/><path d="M7 11.5 L10 15 L13 11.5 Z" fill="#e0661a"/></svg>
<div class="abs" style="left:1326px;top:615px;width:40px;height:81px;background:#fff;border-radius:2px;box-shadow:0 1px 4px -1px rgba(0,0,0,.3)"></div>
<div class="abs" style="left:1337px;top:634px;width:18px;height:2px;background:#555"></div><div class="abs" style="left:1345px;top:626px;width:2px;height:18px;background:#555"></div>
<div class="abs" style="left:1331px;top:655px;width:30px;height:1px;background:#e6e6e6"></div>
<div class="abs" style="left:1337px;top:675px;width:18px;height:2px;background:#555"></div><!--/MAPOVER-->
</div>


<!-- DIALOG -->
<div id="dlgtab"></div>
<div id="dlg">
  <span class="t" id="dtitle" style="left:14px;top:18px;font-size:13px;letter-spacing:0.11px;font-weight:bold;color:#4a5265">SG-742-Farmville-Council / Add a Field</span>
  <svg class="abs" style="left:571px;top:15px" width="14" height="14" viewBox="0 0 14 14"><path d="M1 1 L13 13 M13 1 L1 13" stroke="#444" stroke-width="1.2" fill="none"/></svg>
  <div class="abs" style="left:14px;top:42px;width:572px;height:1px;background:#c9c9c9"></div>
  <div class="abs" style="left:14px;top:53px;width:27px;height:27px;background:#f0f0f0;border-radius:2px"><span class="t" style="left:7px;top:5px;font-family:'Liberation Serif',serif;font-style:italic;font-size:14px;color:#333">fx</span></div>
  <span class="t" id="dinput" style="left:61px;top:60px;font-size:13px;letter-spacing:0.36px;color:#3a3f4d">Allocation amoun</span>
  <div class="abs" style="left:167px;top:57px;width:1px;height:17px;background:#222"></div>
  <svg class="abs" style="left:125px;top:73px" width="42" height="4" viewBox="0 0 42 4"><path d="M0 1 l2 2 l2 -2 l2 2 l2 -2 l2 2 l2 -2 l2 2 l2 -2 l2 2 l2 -2 l2 2 l2 -2 l2 2 l2 -2 l2 2 l2 -2 l2 2 l2 -2 l2 2 l2 -2" fill="none" stroke="#e8282a" stroke-width="1"/></svg>
  <div class="abs" style="left:53px;top:79px;width:533px;height:1.3px;background:#4a5265"></div>
  <svg class="abs" style="left:561px;top:59px" width="15" height="15" viewBox="0 0 15 15"><circle cx="6" cy="6" r="4.6" fill="none" stroke="#999" stroke-width="1.1"/><path d="M9.5 9.5 L14 14" stroke="#999" stroke-width="1.6"/></svg>
  <span class="t" id="dgroup" style="left:61px;top:92px;font-size:13px;letter-spacing:0.3px;color:#4a5265">Funding Allocation</span>
  <div class="abs" style="left:53px;top:110px;width:518px;height:27px;background:#ffff99;border-top:1px solid #e3e3e6"></div>
  <div class="abs" style="left:71px;top:118px;width:14px;height:14px;border:1px solid #b9b98a;background:#fffdd8;font-size:11px;line-height:12px;text-align:center;color:#333">#</div>
  <span class="t" id="dfield" style="left:94px;top:119px;font-size:13px;letter-spacing:0.43px;color:#3a3f4d">Allocation Amount</span>
  <span class="t" id="dsum" style="left:219px;top:119px;font-size:13px;color:#a3a07a">Sum</span>
  <span class="t" id="dmore" style="left:524px;top:118px;font-size:13px;letter-spacing:0.12px;color:#8e8c6a">More...</span>
  <svg class="abs" style="left:298.5px;top:124.5px" width="20" height="26" viewBox="-1 -1 20 26"><path d="M5.4 14.4 V2 a1.55 1.55 0 0 1 3.1 0 V5.6 q1.6 -0.6 2.9 0.6 q1.6 -0.5 2.9 0.8 q2.6 -0.3 3 2.2 V16.5 c0 4.5 -3.3 7 -6.8 7 c-3.6 0 -5.4 -2.3 -7.6 -5.6 L0.6 14.6 c-0.8 -1.2 0.9 -3 2.4 -1.9 Z" fill="#fff" stroke="#1b2033" stroke-width="1.15" stroke-linejoin="round"/><path d="M8.5 5.6 V10.4 M11.4 6.6 V10.4 M14.3 7.4 V10.8" fill="none" stroke="#1b2033" stroke-width="1.1"/></svg>
</div>

<!-- TOP BAR -->
<div id="topbar">
  <span class="t" id="ttl" style="left:20px;top:10px;font-size:13.5px;font-weight:bold;color:#2b2f3a">Set a Title</span>
  <svg class="abs" style="left:110px;top:11px" width="16" height="16" viewBox="0 0 16 16"><circle cx="8" cy="8" r="6.6" fill="none" stroke="#333" stroke-width="1"/><path d="M8 7 L8 11.5" stroke="#333" stroke-width="1.1"/><circle cx="8" cy="4.9" r="0.75" fill="#333"/></svg>
  <div class="btn" style="left:1116px;width:74px;background:#00acd8">Apply</div>
  <div class="btn" style="left:1200px;width:80px;background:#d9504c;box-shadow:inset 0 0 0 1px #d6433e">Cancel</div>
  <svg class="abs" style="left:1295px;top:10px" width="18" height="20" viewBox="0 0 18 20"><path d="M3.5 1.6 L10.5 1.6 L15.6 6.8 L15.6 16.4 Q15.6 18 14 18 L3.5 18 Q2 18 2 16.4 L2 3.2 Q2 1.6 3.5 1.6 Z" fill="none" stroke="#333" stroke-width="1.1"/><path d="M10.5 1.6 L10.5 6.8 L15.6 6.8" fill="none" stroke="#333" stroke-width="1.1"/><path d="M4.6 9.6 L8.8 13.8 L13 9.6" fill="none" stroke="#333" stroke-width="1.1"/></svg>
  <div class="abs" style="left:1340.6px;top:14.6px;width:2.4px;height:2.4px;background:#333"></div><div class="abs" style="left:1340.6px;top:19px;width:2.4px;height:2.4px;background:#333"></div><div class="abs" style="left:1340.6px;top:23.4px;width:2.4px;height:2.4px;background:#333"></div>
</div>

<!-- LEFT PANEL -->
<div id="left">
  <div id="lhead">
    <svg class="abs" style="left:14px;top:5px" width="24" height="28" viewBox="16 7 24 28">
      <path d="M17.8 11.5 L23.1 9.2 L34.3 8.9 L35.9 13.2 L36.2 25.4 L27 28.3 L27 32.6 L22.1 32.9 L19.4 26.4 L17.5 21.1 Z M23.8 16.3 L25.3 22 L31.2 20 L29.5 14.5 Z" fill="#2e8ad0" fill-rule="evenodd"/>
      <path d="M23.1 9.2 L29.5 9 L29.3 14.8 L24 16.5 Z" fill="#0b72c2"/>
      <path d="M17.5 21.1 L18.6 16.3 L24 16.5 L25.4 21.7 L19.4 26.4 Z" fill="#0b72c2"/>
      <path d="M31 19.8 L36 19.5 L36.2 25.4 L27 28.3 L25.4 21.7 Z" fill="#0b72c2"/>
      <path d="M29.3 14.8 L35.9 13.2 L36 19.5 L31 19.8 Z" fill="#1a7dc8"/>
    </svg>
    <span class="t" id="appname" style="left:44px;top:13px;font-size:14px;color:#3a3f4d">Advanced Google He...</span>
    <svg class="abs" style="left:201px;top:16px" width="13" height="8" viewBox="0 0 13 8"><path d="M1 1.2 L6.5 6.5 L12 1.2" fill="none" stroke="#333" stroke-width="1.2"/></svg>
  </div>
  <div id="layerrow">
    <div class="abs" style="left:8px;top:17px;width:0;height:0;border-left:4.5px solid transparent;border-right:4.5px solid transparent;border-top:4.8px solid #333"></div>
    <span class="t" id="layer1" style="left:24px;top:11px;font-size:14px;-webkit-text-stroke:0.4px #3a3f4d;color:#3a3f4d">Layer 1</span>
  </div>
  <span class="t" id="values1" style="left:13px;top:90px;font-size:13px;letter-spacing:-0.12px">Values 1</span>
  <div class="hatch" style="top:112px;height:50px"></div>
  <div class="abs" style="left:151.5px;top:80.5px;width:79px;height:35px;border:5.4px solid #10b4dc;border-radius:8px;background:#f3f3f3"></div>
  <span class="t" id="addtxt" style="left:168px;top:93px;font-size:13px;color:#333">Add</span>
  <div class="abs" style="left:204px;top:98px;width:11px;height:1.2px;background:#333"></div><div class="abs" style="left:209px;top:93px;width:1.2px;height:11px;background:#333"></div>
  <div class="gap" style="top:172px"></div>
  <span class="t" id="tooltipinfo" style="left:13px;top:184px;font-size:13px;letter-spacing:0.5px">Tooltip Information 1</span>
  <div class="abs" style="left:204px;top:192px;width:11px;height:1.2px;background:#333"></div><div class="abs" style="left:209px;top:187px;width:1.2px;height:11px;background:#333"></div>
  <div class="hatch" style="top:206px;height:50px"></div>
  <div class="gap" style="top:266px"></div>
  <svg class="abs" style="left:218px;top:371px" width="20" height="40" viewBox="0 0 20 36" preserveAspectRatio="none"><path d="M20 0 L12 0 Q10 0 9 2 L1 16.5 Q0 18 1 19.5 L9 34 Q10 36 12 36 L20 36 Z" fill="#dcdcdc"/><path d="M11.5 14.5 L8.5 18 L11.5 21.5" fill="none" stroke="#888" stroke-width="1"/></svg>
</div>

<!-- RIGHT PANEL -->
<div id="right">
  <span class="t" id="filters" style="left:44.5px;top:14px;font-size:13px;font-weight:bold;color:#3a3f4d">Filters</span>
  <div class="abs" style="left:120px;top:9px;width:1px;height:22px;background:#d0d0d0"></div>
  <span class="t" id="design" style="left:153.5px;top:14px;font-size:13px;letter-spacing:-0.25px;font-weight:bold;color:#3a3f4d">Design</span>
  <div class="abs" style="left:10px;top:43px;width:221px;height:1px;background:#dcdcdc"></div>

  <div class="card" style="top:59px;height:43px"></div>
  <div class="card" style="top:101px;height:44px"></div>
  <div class="card" style="top:144px;height:43px"></div>
  <div class="card" style="top:186px;height:43px"></div>
  <div class="card" style="top:228px;height:487px"></div>

  <span class="sec" id="sgen" style="top:72px;letter-spacing:-0.45px">General</span>
  <span class="sec" id="smap" style="top:114px">Map Controls</span>
  <span class="sec" id="stip" style="top:157px;letter-spacing:0.3px">Tooltip</span>
  <span class="sec" id="sleg" style="top:199px;letter-spacing:-0.25px">Legend</span>
  <span class="sec" id="slay" style="top:242px;letter-spacing:-0.9px">Layer1</span>
  <svg class="chev" style="top:76px" viewBox="0 0 16 10"><path d="M2 1.8 L8 7.8 L14 1.8" fill="none" stroke="#222" stroke-width="1.6"/></svg>
  <svg class="chev" style="top:118px" viewBox="0 0 16 10"><path d="M2 1.8 L8 7.8 L14 1.8" fill="none" stroke="#222" stroke-width="1.6"/></svg>
  <svg class="chev" style="top:161px" viewBox="0 0 16 10"><path d="M2 1.8 L8 7.8 L14 1.8" fill="none" stroke="#222" stroke-width="1.6"/></svg>
  <svg class="chev" style="top:203px" viewBox="0 0 16 10"><path d="M2 1.8 L8 7.8 L14 1.8" fill="none" stroke="#222" stroke-width="1.6"/></svg>
  <svg class="chev" style="top:246px" viewBox="0 0 16 10"><path d="M2 8.2 L8 2.2 L14 8.2" fill="none" stroke="#222" stroke-width="1.6"/></svg>

  <span class="lbl" id="l1" style="top:284px">Layer Name</span>
  <div class="inp" style="top:304px"><span id="i1">Layer1</span>
    <svg class="abs" style="left:166px;top:9px" width="17" height="17" viewBox="0 0 17 17"><circle cx="8.5" cy="8.5" r="8" fill="#757575"/><path d="M5.3 5.3 L11.7 11.7 M11.7 5.3 L5.3 11.7" stroke="#fff" stroke-width="1.8"/></svg>
  </div>
  <span class="lbl" id="l2" style="top:354px;letter-spacing:-0.2px">Layer Type</span>
  <div class="inp" style="top:374px"><span id="i2">Pins</span><div class="caret"></div></div>
  <span class="lbl" id="l3" style="top:424px;letter-spacing:-0.15px">Color Pins By</span>
  <div class="inp" style="top:444px"><span id="i3" style="letter-spacing:0.14px">Selected Measure</span><div class="caret"></div></div>
  <span class="lbl" id="l4" style="top:494px;letter-spacing:0.13px">Clusterer Max Zoom</span>
  <div class="inp" style="top:514px"><span id="i4">22</span>
    <div class="abs" style="left:169px;top:8px;width:0;height:0;border-left:4px solid transparent;border-right:4px solid transparent;border-bottom:4.5px solid #222"></div>
    <div class="abs" style="left:169px;top:24px;width:0;height:0;border-left:4px solid transparent;border-right:4px solid transparent;border-top:4.5px solid #222"></div>
  </div>
  <div class="abs" id="ta" style="left:23px;top:560px;width:193px;height:136px;border:1px solid #dcdcdc;border-radius:4px;background:#fff;font-size:12px;line-height:16.3px;color:#2b2b2b;padding:3px 0 0 10px;white-space:nowrap;overflow:hidden">The maxZoom parameter<br>controls the zoom level after<br>which the clustering is not<br>active. 22 is the max zoon-in<br>and 1 is the whole world view.<br>Setting a value smaller than 4-5<br>will disable clustering<br>completely in most cases.</div>
  <div class="abs" style="left:29px;top:735px;width:180px;height:30px;background:#337ab7;border-radius:4px 4px 0 0;color:#fff;font-size:13.5px;text-align:center;line-height:38px"><span id="analyze">Analyze Layers</span></div>
  <svg class="abs" style="left:-0.5px;top:375px" width="19" height="40" viewBox="0 0 19 40"><path d="M0 0 L6.5 0 Q9 0 10 2.2 L18.3 18.5 Q19 20 18.3 21.5 L10 37.8 Q9 40 6.5 40 L0 40 Z" fill="rgba(120,120,120,0.22)"/><path d="M4.5 15.8 L8 20 L4.5 24.2" fill="none" stroke="#9a9a9a" stroke-width="1"/></svg>
</div>

</div>
</body>
</html>
